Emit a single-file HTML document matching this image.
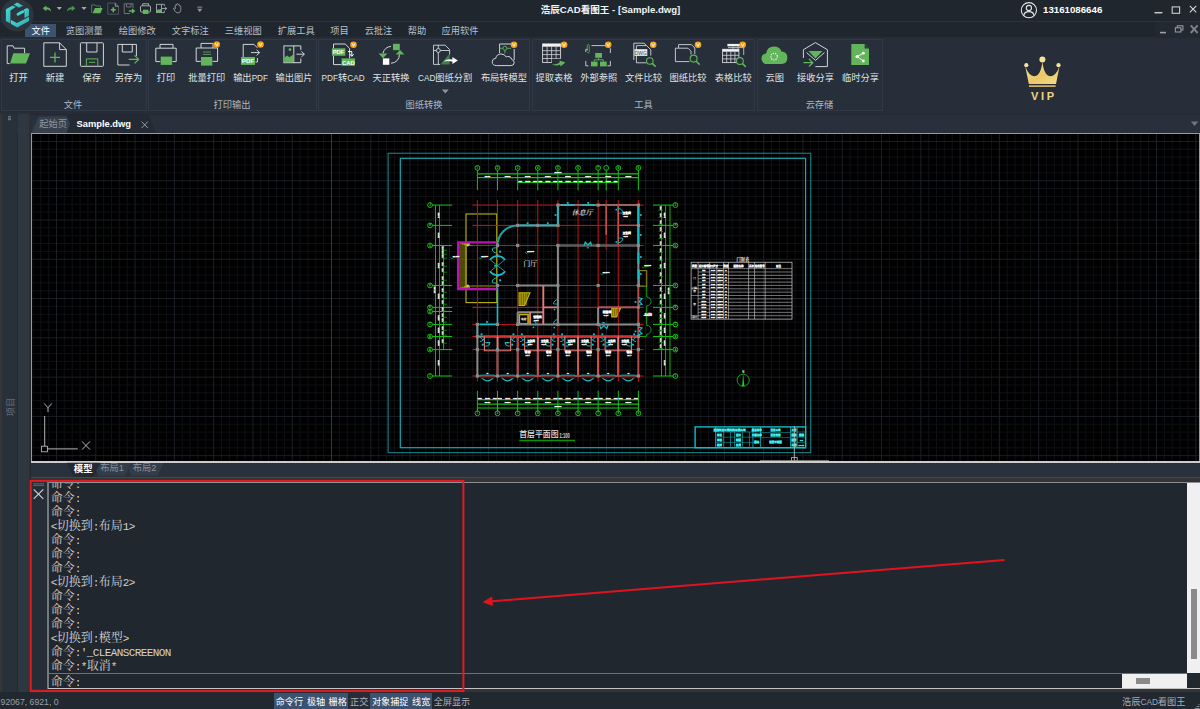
<!DOCTYPE html>
<html lang="zh-CN"><head><meta charset="utf-8"><title>浩辰CAD看图王 - [Sample.dwg]</title>
<style>
html,body{margin:0;padding:0;background:#222830;}
body{width:1200px;height:709px;overflow:hidden;position:relative;font-family:"Liberation Sans","Noto Sans CJK SC",sans-serif;}
#app{position:absolute;left:0;top:0;width:1200px;height:709px;overflow:hidden;background:#222830;}
.t{position:absolute;white-space:nowrap;line-height:1;z-index:2;}
.r{position:absolute;}
.la{font-size:0.89em;}
svg{position:absolute;left:0;top:0;overflow:visible;}
.cmd{position:absolute;left:51px;font-family:"Liberation Mono","Noto Serif CJK SC",serif;font-size:12px;color:#d4d4d4;white-space:nowrap;line-height:14px;height:14px;}
.cmd b{font-weight:normal;font-size:11px;letter-spacing:-0.6px;}
</style></head>
<body><div id="app">
<div class="r" style="left:0.00px;top:0.00px;width:1200.00px;height:21.00px;background:#20262e;"></div>
<div class="r" style="left:0.00px;top:21.00px;width:1200.00px;height:1.00px;background:#2b323c;"></div>
<div class="r" style="left:0.00px;top:22.00px;width:1200.00px;height:15.20px;background:#20262e;"></div>
<div class="r" style="left:0.00px;top:37.20px;width:1200.00px;height:76.80px;background:#262d38;"></div>
<div class="r" style="left:1.00px;top:39.30px;width:146.00px;height:72.20px;background:#272f3a;box-sizing:border-box;border:1px solid #303945;"></div>
<div class="r" style="left:148.30px;top:39.30px;width:168.40px;height:72.20px;background:#272f3a;box-sizing:border-box;border:1px solid #303945;"></div>
<div class="r" style="left:317.80px;top:39.30px;width:212.60px;height:72.20px;background:#272f3a;box-sizing:border-box;border:1px solid #303945;"></div>
<div class="r" style="left:532.30px;top:39.30px;width:222.90px;height:72.20px;background:#272f3a;box-sizing:border-box;border:1px solid #303945;"></div>
<div class="r" style="left:757.40px;top:39.30px;width:125.20px;height:72.20px;background:#272f3a;box-sizing:border-box;border:1px solid #303945;"></div>
<div class="r" style="left:883.00px;top:37.20px;width:317.00px;height:76.30px;background:#272e39;"></div>
<div class="r" style="left:0.00px;top:113.50px;width:1200.00px;height:1.00px;background:#222932;"></div>
<div class="r" style="left:0.00px;top:114.50px;width:1200.00px;height:19.00px;background:#27303b;"></div>
<div class="r" style="left:0.00px;top:114.00px;width:1.70px;height:578.00px;background:#363636;"></div>
<div class="r" style="left:1.70px;top:114.00px;width:15.80px;height:578.00px;background:#28303a;"></div>
<div class="r" style="left:17.50px;top:114.00px;width:8.50px;height:578.00px;background:#2e3843;"></div>
<div class="r" style="left:26.00px;top:114.00px;width:3.20px;height:578.00px;background:#32353a;"></div>
<div class="r" style="left:29.20px;top:114.00px;width:1.30px;height:578.00px;background:#28303a;"></div>
<div class="r" style="left:30.50px;top:133.00px;width:1169.50px;height:329.70px;background:#9a9a9a;"></div>
<div class="r" style="left:32.00px;top:134.00px;width:1167.00px;height:326.70px;background:#000;"></div>
<div class="r" style="left:30.50px;top:460.70px;width:1169.50px;height:2.00px;background:#cdcdcd;"></div>
<div class="r" style="left:30.50px;top:462.70px;width:1169.50px;height:14.80px;background:#29313c;"></div>
<div class="r" style="left:30.50px;top:477.30px;width:1169.50px;height:0.80px;background:#3a4b60;"></div>
<div class="r" style="left:30.50px;top:478.00px;width:1169.50px;height:4.00px;background:#323436;"></div>
<div class="r" style="left:47.00px;top:482.10px;width:1153.00px;height:1.00px;background:#8c9095;"></div>
<div class="r" style="left:30.50px;top:482.00px;width:16.50px;height:207.00px;background:#252d37;"></div>
<div class="r" style="left:47.00px;top:482.10px;width:1.80px;height:206.50px;background:#74797e;"></div>
<div class="r" style="left:48.80px;top:483.10px;width:1138.20px;height:205.20px;background:#21272f;"></div>
<div class="r" style="left:48.50px;top:673.00px;width:1138.50px;height:1.00px;background:#6e7278;"></div>
<div class="r" style="left:47.50px;top:688.20px;width:1152.50px;height:1.00px;background:#c4c4c4;"></div>
<div class="r" style="left:30.50px;top:689.20px;width:1169.50px;height:2.80px;background:#323436;"></div>
<div class="r" style="left:1187.00px;top:483.00px;width:13.00px;height:190.00px;background:#f0f0f0;"></div>
<div class="r" style="left:1191.40px;top:589.00px;width:6.00px;height:69.60px;background:#8a8a8a;"></div>
<div class="r" style="left:1122.20px;top:674.00px;width:64.80px;height:14.00px;background:#f0f0f0;"></div>
<div class="r" style="left:1136.30px;top:678.20px;width:13.70px;height:5.50px;background:#8a8a8a;"></div>
<div class="r" style="left:0.00px;top:692.00px;width:1200.00px;height:17.00px;background:#222830;"></div>
<div class="r" style="left:274.40px;top:693.40px;width:73.60px;height:15.60px;background:#3b5270;"></div>
<div class="r" style="left:369.60px;top:693.40px;width:62.00px;height:15.60px;background:#3b5270;"></div>
<div class="r" style="left:348.00px;top:693.40px;width:21.60px;height:15.60px;background:#262d37;"></div>
<div class="t" style="left:610.50px;top:10.30px;font-size:9.60px;color:#f2f4f6;font-weight:bold;transform:translate(-50%,-50%);">浩辰CAD看图王 - [Sample.dwg]</div>
<div class="t" style="left:1043.00px;top:10.20px;font-size:9.70px;color:#ffffff;font-weight:bold;transform:translate(0,-50%);">13161086646</div>
<div class="r" style="left:25.40px;top:24.00px;width:31.00px;height:13.00px;background:#3b5270;"></div>
<div class="t" style="left:40.80px;top:31.60px;font-size:9.25px;color:#ffffff;font-weight:normal;transform:translate(-50%,-50%);">文件</div>
<div class="t" style="left:84.30px;top:31.60px;font-size:9.25px;color:#b9c0c9;font-weight:normal;transform:translate(-50%,-50%);">览图测量</div>
<div class="t" style="left:137.30px;top:31.60px;font-size:9.25px;color:#b9c0c9;font-weight:normal;transform:translate(-50%,-50%);">绘图修改</div>
<div class="t" style="left:190.30px;top:31.60px;font-size:9.25px;color:#b9c0c9;font-weight:normal;transform:translate(-50%,-50%);">文字标注</div>
<div class="t" style="left:243.30px;top:31.60px;font-size:9.25px;color:#b9c0c9;font-weight:normal;transform:translate(-50%,-50%);">三维视图</div>
<div class="t" style="left:296.30px;top:31.60px;font-size:9.25px;color:#b9c0c9;font-weight:normal;transform:translate(-50%,-50%);">扩展工具</div>
<div class="t" style="left:339.50px;top:31.60px;font-size:9.25px;color:#b9c0c9;font-weight:normal;transform:translate(-50%,-50%);">项目</div>
<div class="t" style="left:378.50px;top:31.60px;font-size:9.25px;color:#b9c0c9;font-weight:normal;transform:translate(-50%,-50%);">云批注</div>
<div class="t" style="left:417.00px;top:31.60px;font-size:9.25px;color:#b9c0c9;font-weight:normal;transform:translate(-50%,-50%);">帮助</div>
<div class="t" style="left:460.00px;top:31.60px;font-size:9.25px;color:#b9c0c9;font-weight:normal;transform:translate(-50%,-50%);">应用软件</div>
<div class="t" style="left:18.40px;top:78.50px;font-size:9.25px;color:#dfe3e7;font-weight:normal;transform:translate(-50%,-50%);">打开</div>
<div class="t" style="left:55.00px;top:78.50px;font-size:9.25px;color:#dfe3e7;font-weight:normal;transform:translate(-50%,-50%);">新建</div>
<div class="t" style="left:91.80px;top:78.50px;font-size:9.25px;color:#dfe3e7;font-weight:normal;transform:translate(-50%,-50%);">保存</div>
<div class="t" style="left:128.50px;top:78.50px;font-size:9.25px;color:#dfe3e7;font-weight:normal;transform:translate(-50%,-50%);">另存为</div>
<div class="t" style="left:166.00px;top:78.50px;font-size:9.25px;color:#dfe3e7;font-weight:normal;transform:translate(-50%,-50%);">打印</div>
<div class="t" style="left:206.70px;top:78.50px;font-size:9.25px;color:#dfe3e7;font-weight:normal;transform:translate(-50%,-50%);">批量打印</div>
<div class="t" style="left:250.60px;top:78.50px;font-size:9.25px;color:#dfe3e7;font-weight:normal;transform:translate(-50%,-50%);">输出<span class="la">PDF</span></div>
<div class="t" style="left:294.00px;top:78.50px;font-size:9.25px;color:#dfe3e7;font-weight:normal;transform:translate(-50%,-50%);">输出图片</div>
<div class="t" style="left:343.10px;top:78.50px;font-size:9.25px;color:#dfe3e7;font-weight:normal;transform:translate(-50%,-50%);"><span class="la">PDF</span>转<span class="la">CAD</span></div>
<div class="t" style="left:391.10px;top:78.50px;font-size:9.25px;color:#dfe3e7;font-weight:normal;transform:translate(-50%,-50%);">天正转换</div>
<div class="t" style="left:445.20px;top:78.50px;font-size:9.25px;color:#dfe3e7;font-weight:normal;transform:translate(-50%,-50%);"><span class="la">CAD</span>图纸分割</div>
<div class="t" style="left:504.00px;top:78.50px;font-size:9.25px;color:#dfe3e7;font-weight:normal;transform:translate(-50%,-50%);">布局转模型</div>
<div class="t" style="left:554.10px;top:78.50px;font-size:9.25px;color:#dfe3e7;font-weight:normal;transform:translate(-50%,-50%);">提取表格</div>
<div class="t" style="left:598.70px;top:78.50px;font-size:9.25px;color:#dfe3e7;font-weight:normal;transform:translate(-50%,-50%);">外部参照</div>
<div class="t" style="left:643.50px;top:78.50px;font-size:9.25px;color:#dfe3e7;font-weight:normal;transform:translate(-50%,-50%);">文件比较</div>
<div class="t" style="left:688.10px;top:78.50px;font-size:9.25px;color:#dfe3e7;font-weight:normal;transform:translate(-50%,-50%);">图纸比较</div>
<div class="t" style="left:733.30px;top:78.50px;font-size:9.25px;color:#dfe3e7;font-weight:normal;transform:translate(-50%,-50%);">表格比较</div>
<div class="t" style="left:774.70px;top:78.50px;font-size:9.25px;color:#dfe3e7;font-weight:normal;transform:translate(-50%,-50%);">云图</div>
<div class="t" style="left:815.40px;top:78.50px;font-size:9.25px;color:#dfe3e7;font-weight:normal;transform:translate(-50%,-50%);">接收分享</div>
<div class="t" style="left:860.40px;top:78.50px;font-size:9.25px;color:#dfe3e7;font-weight:normal;transform:translate(-50%,-50%);">临时分享</div>
<div class="t" style="left:73.00px;top:106.00px;font-size:9.25px;color:#b0b8c2;font-weight:normal;transform:translate(-50%,-50%);">文件</div>
<div class="t" style="left:232.00px;top:106.00px;font-size:9.25px;color:#b0b8c2;font-weight:normal;transform:translate(-50%,-50%);">打印输出</div>
<div class="t" style="left:424.00px;top:106.00px;font-size:9.25px;color:#b0b8c2;font-weight:normal;transform:translate(-50%,-50%);">图纸转换</div>
<div class="t" style="left:643.40px;top:106.00px;font-size:9.25px;color:#b0b8c2;font-weight:normal;transform:translate(-50%,-50%);">工具</div>
<div class="t" style="left:819.50px;top:106.00px;font-size:9.25px;color:#b0b8c2;font-weight:normal;transform:translate(-50%,-50%);">云存储</div>
<div class="t" style="left:1044.00px;top:96.00px;font-size:11.00px;color:#f0d484;font-weight:bold;transform:translate(-50%,-50%);letter-spacing:2.7px;">VIP</div>
<div class="t" style="left:53.20px;top:125.30px;font-size:9.25px;color:#8d96a1;font-weight:normal;transform:translate(-50%,-50%);">起始页</div>
<div class="t" style="left:76.50px;top:125.20px;font-size:9.35px;color:#ffffff;font-weight:bold;transform:translate(0,-50%);">Sample.dwg</div>
<div class="t" style="left:83.20px;top:469.00px;font-size:9.40px;color:#ffffff;font-weight:bold;transform:translate(-50%,-50%);">模型</div>
<div class="t" style="left:112.20px;top:469.00px;font-size:9.25px;color:#8a929c;font-weight:normal;transform:translate(-50%,-50%);">布局1</div>
<div class="t" style="left:144.60px;top:469.00px;font-size:9.25px;color:#8a929c;font-weight:normal;transform:translate(-50%,-50%);">布局2</div>
<div class="t" style="left:11.6px;top:407.4px;font-size:9.25px;color:#626d79;transform:translate(-50%,-50%) rotate(-90deg);">项目</div>
<div class="t" style="left:0.60px;top:702.00px;font-size:8.70px;color:#98a0aa;font-weight:normal;transform:translate(0,-50%);">92067, 6921, 0</div>
<div class="t" style="left:289.40px;top:702.60px;font-size:9.10px;color:#ffffff;font-weight:normal;transform:translate(-50%,-50%);">命令行</div>
<div class="t" style="left:316.00px;top:702.60px;font-size:9.10px;color:#ffffff;font-weight:normal;transform:translate(-50%,-50%);">极轴</div>
<div class="t" style="left:337.70px;top:702.60px;font-size:9.10px;color:#ffffff;font-weight:normal;transform:translate(-50%,-50%);">栅格</div>
<div class="t" style="left:359.20px;top:702.60px;font-size:9.10px;color:#aab2bc;font-weight:normal;transform:translate(-50%,-50%);">正交</div>
<div class="t" style="left:390.20px;top:702.60px;font-size:9.10px;color:#ffffff;font-weight:normal;transform:translate(-50%,-50%);">对象捕捉</div>
<div class="t" style="left:421.20px;top:702.60px;font-size:9.10px;color:#ffffff;font-weight:normal;transform:translate(-50%,-50%);">线宽</div>
<div class="t" style="left:452.00px;top:702.60px;font-size:9.10px;color:#aab2bc;font-weight:normal;transform:translate(-50%,-50%);">全屏显示</div>
<div class="t" style="left:1153.80px;top:702.80px;font-size:9.25px;color:#a4acb6;font-weight:normal;transform:translate(-50%,-50%);">浩辰<span class="la">CAD</span>看图王</div>
<div style="position:absolute;left:48.5px;top:483px;width:1138px;height:205px;overflow:hidden;z-index:2;">
<div class="cmd" style="left:2.3px;top:-5px;">命令<b>:</b></div>
<div class="cmd" style="left:2.3px;top:9px;">命令<b>:</b></div>
<div class="cmd" style="left:2.3px;top:23px;">命令<b>:</b></div>
<div class="cmd" style="left:2.3px;top:37px;"><b>&lt;</b>切换到<b>:</b>布局<b>1&gt;</b></div>
<div class="cmd" style="left:2.3px;top:51px;">命令<b>:</b></div>
<div class="cmd" style="left:2.3px;top:65px;">命令<b>:</b></div>
<div class="cmd" style="left:2.3px;top:79px;">命令<b>:</b></div>
<div class="cmd" style="left:2.3px;top:93px;"><b>&lt;</b>切换到<b>:</b>布局<b>2&gt;</b></div>
<div class="cmd" style="left:2.3px;top:107px;">命令<b>:</b></div>
<div class="cmd" style="left:2.3px;top:121px;">命令<b>:</b></div>
<div class="cmd" style="left:2.3px;top:135px;">命令<b>:</b></div>
<div class="cmd" style="left:2.3px;top:149px;"><b>&lt;</b>切换到<b>:</b>模型<b>&gt;</b></div>
<div class="cmd" style="left:2.3px;top:163px;">命令<b>:'_CLEANSCREENON</b></div>
<div class="cmd" style="left:2.3px;top:177px;">命令<b>:*</b>取消<b>*</b></div>
<div class="cmd" style="left:2.3px;top:193px;">命令<b>:</b></div>
</div>
<svg width="1200" height="135" viewBox="0 0 1200 135" style="z-index:1">
<defs><linearGradient id="lg" x1="0" y1="0" x2="1" y2="1"><stop offset="0" stop-color="#49e0e0"/><stop offset="1" stop-color="#2aa3a8"/></linearGradient><linearGradient id="gold" x1="0" y1="0" x2="1" y2="1"><stop offset="0" stop-color="#f7e7a6"/><stop offset="0.55" stop-color="#ecc865"/><stop offset="1" stop-color="#f5dc8e"/></linearGradient></defs>
<circle cx="17.2" cy="15.2" r="16.4" fill="#2f353d"/>
<g fill="url(#lg)"><polygon points="13.8,4.6 17.2,2.6 23.1,5.7 18.9,7.7"/><polygon points="5.9,9.3 12.7,5.4 15.8,7.1 10.4,10.4 10.4,23.4 5.9,20.9"/><polygon points="11,20 16.9,23.1 29,16.9 29,20.9 17.2,27.6 11,24"/><polygon points="23.7,9.6 27.1,7.9 29,9.3 29,16.1 24.5,18 24.5,11.3"/></g><line x1="18" y1="14.3" x2="23" y2="11.6" stroke="#3fd2d3" stroke-width="2.8" stroke-linecap="round"/>
<path d="M42.7 8.3 L46.3 5.4 L46.3 7.2 C49.5 7.2 51 9.2 51.2 11.8 C50 10.2 48.6 9.6 46.3 9.6 L46.3 11.2 Z" fill="#62b55a"/>
<path d="M75.4 8.3 L71.8 5.4 L71.8 7.2 C68.6 7.2 67.1 9.2 66.9 11.8 C68.1 10.2 69.5 9.6 71.8 9.6 L71.8 11.2 Z" fill="#4c9147"/>
<polygon points="56.6,7 61.9,7 59.25,10.1" fill="#a4a8ad"/><polygon points="81.4,7 86.6,7 84,10.1" fill="#a4a8ad"/>
<path d="M91.6 13 V4.9 H95 L96 6 H100.4 V8" fill="none" stroke="#6a6f76" stroke-width="0.9"/>
<polygon points="92.6,13.3 94.9,8 102.6,8 100.5,13.3" fill="#62b55a"/>
<path d="M107.8 3 H115.3 L118.5 6.2 V14.2 H107.8 Z" fill="none" stroke="#555a61" stroke-width="0.9"/><path d="M115.3 3 V6.2 H118.5" fill="none" stroke="#a9adb2" stroke-width="0.9"/>
<path d="M110.8 9.75 H115.8 M113.3 7.2 V12.3" stroke="#62b55a" stroke-width="1.6"/>
<path d="M133 8 V3.8 H124.2 V13.5 H130" fill="none" stroke="#767b82" stroke-width="0.9"/><path d="M126.5 3.8 V7 H131 V3.8" fill="none" stroke="#767b82" stroke-width="0.9"/>
<path d="M128.8 11 H134 M132 9 L134.3 11 L132 13" fill="none" stroke="#62b55a" stroke-width="1.3"/>
<rect x="140.5" y="5.8" width="10" height="6.2" rx="1" fill="none" stroke="#b4b8bd" stroke-width="0.9"/><path d="M142.6 5.8 V3.8 H148.6 V5.8" fill="none" stroke="#b4b8bd" stroke-width="0.9"/>
<rect x="142.9" y="9.7" width="5.5" height="4.3" fill="#62b55a"/>
<rect x="156.6" y="4.3" width="4.8" height="8.3" fill="none" stroke="#b4b8bd" stroke-width="0.8"/><polygon points="157,12.4 157,10.2 158.6,9 159.6,9.8 161,8.8 161,12.4" fill="#62b55a"/>
<path d="M161.4 4.3 H164.3 V6.2 M164.3 10.6 V12.6 H161.4 M162 8.5 H166.6 M165 7 L166.8 8.5 L165 10" fill="none" stroke="#b4b8bd" stroke-width="0.8"/>
<path d="M175.3 8.8 V5.2 Q175.9 4.2 176.6 5.2 V4.2 Q177.3 3.2 178 4.2 V4.8 Q178.7 3.9 179.4 4.9 V6 Q180.2 5.4 180.8 6.4 V9.8 Q180.8 12.9 178 12.9 Q175.8 12.9 174.8 11 L173.5 8.4 Q174.3 7.4 175.3 8.8" fill="none" stroke="#9ea3a9" stroke-width="0.8"/>
<path d="M197.3 7.1 H202.2" stroke="#8f949a" stroke-width="1"/><polygon points="197.3,8.8 202.2,8.8 199.75,12.3" fill="#8f949a"/>
<circle cx="1028.9" cy="10.2" r="7.6" fill="none" stroke="#e4e4e4" stroke-width="1.1"/><circle cx="1028.9" cy="8" r="2.6" fill="none" stroke="#e4e4e4" stroke-width="1.1"/><path d="M1023.8 15.6 Q1024.2 11.6 1028.9 11.6 Q1033.6 11.6 1034 15.6" fill="none" stroke="#e4e4e4" stroke-width="1.1"/>
<path d="M1154.5 12.7 H1162.4" stroke="#c6c6c6" stroke-width="1.5"/><rect x="1172.2" y="6.9" width="7.4" height="6.4" fill="none" stroke="#cccccc" stroke-width="1.1"/><path d="M1189.8 5.8 L1196.3 12.3 M1196.3 5.8 L1189.8 12.3" stroke="#d8d8d8" stroke-width="1.1"/>
<rect x="1155" y="22" width="45" height="16" fill="#232932"/>
<path d="M1160 32.6 H1166" stroke="#9ea2a7" stroke-width="1.6"/><rect x="1177.3" y="25.8" width="5.6" height="4.2" fill="none" stroke="#9ea2a7" stroke-width="1"/><rect x="1175.3" y="27.8" width="5.6" height="4.2" fill="#232932" stroke="#9ea2a7" stroke-width="1"/><path d="M1190.8 25.4 L1197.6 33 M1197.6 25.4 L1190.8 33" stroke="#7e8287" stroke-width="1.9"/>
<path d="M1028.8 83.9 L1025.3 66.6 Q1030.4 79.6 1037.6 75 Q1041.4 71.6 1042.4 61.8 Q1043.4 71.6 1047.2 75 Q1054.4 79.6 1059.5 66.6 L1056 83.9 Z" fill="url(#gold)"/><circle cx="1042.4" cy="59.6" r="3" fill="#f6e29b"/><circle cx="1026.3" cy="65.2" r="2.1" fill="#f6e29b"/><circle cx="1058.5" cy="65.2" r="2.1" fill="#f6e29b"/><path d="M1029 86.1 H1055.6" stroke="#ecc968" stroke-width="1.5"/>
<path d="M9.6 63.6 H7.2 V45.8 H13 L14.2 48.2 H24.6 V53" fill="none" stroke="#d2d6da" stroke-width="1"/>
<polygon points="10,63.6 13.3,53.2 30,53.2 26,63.6" fill="#62b55a"/>
<path d="M43.8 42.8 H59.6 L66.3 49.6 V66.3 H43.8 Z" fill="none" stroke="#d2d6da" stroke-width="1"/><path d="M59.6 42.8 V49.6 H66.3" fill="none" stroke="#d2d6da" stroke-width="1"/>
<path d="M50 57.4 H60 M55 52.4 V62.4" stroke="#62b55a" stroke-width="1.3"/>
<rect x="80.4" y="42.8" width="23" height="23.5" rx="0.8" fill="none" stroke="#d2d6da" stroke-width="1"/><path d="M86.7 42.8 V52 H97 V42.8" fill="none" stroke="#d2d6da" stroke-width="1"/>
<path d="M86.4 66.3 V58.9 H97.8 V66.3 M89 62.3 H95.2" fill="none" stroke="#62b55a" stroke-width="1"/>
<path d="M136.4 56 V44.4 H117.8 V65 H129.6" fill="none" stroke="#d2d6da" stroke-width="1"/><path d="M122.3 44.4 V52 H132.3 V44.4" fill="none" stroke="#d2d6da" stroke-width="1"/>
<path d="M128.6 59.4 H138.2 M134.6 55.4 L138.6 59.4 L134.6 63.4" fill="none" stroke="#62b55a" stroke-width="1.3"/>
<path d="M160.4 61.6 H155.8 V48.2 H176.2 V61.6 H172.4 M160 48.2 V44.4 H173 V48.2" fill="none" stroke="#d2d6da" stroke-width="1"/>
<rect x="160.7" y="56.6" width="11.4" height="8.3" fill="#62b55a"/>
<path d="M200.8 61.4 H196.2 V48 H217.6 V61.4 H212.6 M201 48 V43.4 H213 V48" fill="none" stroke="#d2d6da" stroke-width="1"/>
<path d="M203 52 H211 M203 54.4 H211" stroke="#62b55a" stroke-width="0.8"/><rect x="201" y="57" width="11.3" height="8.6" fill="#62b55a"/>
<circle cx="216.7" cy="44.5" r="3.3" fill="#f2a21e"/><path d="M215.20 43.10 l1.5 3 l1.5 -3" fill="none" stroke="#fff" stroke-width="0.9"/>
<path d="M243.2 57 V44.4 H254 L257.4 47.8 M257.4 58 V62 H255.4" fill="none" stroke="#d2d6da" stroke-width="1"/>
<path d="M251 52.6 H259.4 M256.6 49.8 L259.6 52.6 L256.6 55.4" fill="none" stroke="#d2d6da" stroke-width="1"/>
<rect x="241" y="57" width="14" height="7.9" fill="#62b55a"/><text x="248" y="63.4" font-size="6.2" font-weight="bold" fill="#fff" text-anchor="middle" font-family="Liberation Sans,sans-serif">PDF</text>
<circle cx="260.5" cy="44.5" r="3.3" fill="#f2a21e"/><path d="M259.00 43.10 l1.5 3 l1.5 -3" fill="none" stroke="#fff" stroke-width="0.9"/>
<rect x="283.9" y="45.9" width="9.9" height="16.8" fill="none" stroke="#d2d6da" stroke-width="1"/><path d="M293.8 45.9 H300.8 V50 M300.8 58.6 V62.7 H293.8" fill="none" stroke="#d2d6da" stroke-width="1"/>
<polygon points="284.4,62.2 284.4,57.6 287.2,55.6 289.4,57.2 293.3,54.4 293.3,62.2" fill="#62b55a"/><circle cx="290" cy="49.6" r="1.4" fill="#62b55a"/>
<path d="M296.4 54.2 H304.2 M301.4 51.4 L304.4 54.2 L301.4 57" fill="none" stroke="#d2d6da" stroke-width="1"/>
<path d="M333.5 48.3 V44 H345.2 L349.6 48.4 V58.4 M341.6 64.6 H333.5 V55.7" fill="none" stroke="#d2d6da" stroke-width="1"/>
<rect x="331.9" y="48.3" width="13.4" height="7.4" fill="#62b55a"/><text x="338.6" y="54.4" font-size="5.9" font-weight="bold" fill="#fff" text-anchor="middle" font-family="Liberation Sans,sans-serif">PDF</text>
<rect x="341.6" y="58.4" width="13.4" height="7.4" fill="#62b55a"/><text x="348.3" y="64.5" font-size="5.9" font-weight="bold" fill="#fff" text-anchor="middle" font-family="Liberation Sans,sans-serif">CAD</text>
<path d="M348 51.6 H351.8 V55.8 M350 54.2 L351.8 56.4 L353.6 54.2" fill="none" stroke="#fff" stroke-width="1"/>
<circle cx="353.5" cy="44.7" r="3.3" fill="#f2a21e"/><path d="M352.00 43.30 l1.5 3 l1.5 -3" fill="none" stroke="#fff" stroke-width="0.9"/>
<path d="M383 53.4 A8.4 8.4 0 0 1 391 46.4" fill="none" stroke="#d2d6da" stroke-width="1"/><path d="M399.4 54.4 A8.4 8.4 0 0 1 391 63.2" fill="none" stroke="#d2d6da" stroke-width="1"/>
<polygon points="378.6,53.6 387.4,53.6 383,58.2" fill="#62b55a"/><polygon points="395.6,54.6 404.4,54.6 400,50" fill="#62b55a"/>
<rect x="393" y="43.8" width="6.8" height="6.4" fill="#62b55a"/><rect x="382.9" y="58.4" width="6.4" height="6.4" fill="#fff"/>
<path d="M433.5 64.4 V45.2 H445.2 L449.6 49.6 V55 M433.5 64.4 H440 M438.3 45.2 V48.5 M438.3 52.5 V64.4 M433.5 50.5 H436.3 M440.3 50.5 H449.6" fill="none" stroke="#d2d6da" stroke-width="0.9"/><circle cx="438.3" cy="50.5" r="2" fill="none" stroke="#d2d6da" stroke-width="0.9"/>
<polygon points="440.4,64.4 449.6,53.6 449.6,64.4" fill="#3f7f45"/>
<path d="M443.4 61.6 Q447.4 58.4 452.4 59.4 V57 L457.8 60.4 L452.4 64 V61.6 Q447.4 60.6 443.4 61.6 Z" fill="#fff"/>
<path d="M499.6 53 V44 H511 M514.2 49 V60" fill="none" stroke="#d2d6da" stroke-width="1"/>
<path d="M496.6 65.6 Q492.2 65.6 492.2 61.8 Q492.2 58.6 495.8 58.2 Q496.6 54 501.2 54 Q504.8 54 506.2 57 Q507.4 56.2 509 56.6 Q511.4 57.2 511.6 59.4 Q514.2 60 514.2 62.6 Q514.2 65.6 510.8 65.6 Z" fill="#272f3a" stroke="#d2d6da" stroke-width="1"/>
<path d="M499.6 48.3 H502.9 M506.9 48.3 H511 M504.9 50.3 V53.6" stroke="#62b55a" stroke-width="0.9"/><circle cx="504.9" cy="48.3" r="2" fill="none" stroke="#62b55a" stroke-width="0.9"/>
<circle cx="514.0" cy="44.7" r="3.3" fill="#f2a21e"/><path d="M512.50 43.30 l1.5 3 l1.5 -3" fill="none" stroke="#fff" stroke-width="0.9"/>
<rect x="542.6" y="43.9" width="18" height="18.6" fill="none" stroke="#d2d6da" stroke-width="0.9"/><rect x="542.6" y="43.9" width="18" height="2.8" fill="#f2f2f2"/>
<path d="M547.1 46.7 V62.5 M551.6 46.7 V62.5 M556.1 46.7 V62.5 M542.6 50.7 H560.6 M542.6 54.6 H560.6 M542.6 58.5 H560.6" stroke="#d2d6da" stroke-width="0.8"/>
<rect x="551.8" y="58.8" width="13.4" height="7.6" fill="#272f3a"/><path d="M551.6 64.4 Q556.4 65 559.6 62.6 L559.6 60.4 L565.4 62.4 L560.4 66.4 L560.2 64.6 Q556.4 66.4 551.6 64.4 Z" fill="#62b55a"/>
<circle cx="564.1" cy="44.8" r="3.3" fill="#f2a21e"/><path d="M562.60 43.40 l1.5 3 l1.5 -3" fill="none" stroke="#fff" stroke-width="0.9"/>
<path d="M587.6 49.4 H585.8 V52 M585.8 61 V65.8 H588.4 M607.4 65.8 H610.4 V61 M610.4 53 V48.6 L607.2 45.6 H591.4" fill="none" stroke="#d2d6da" stroke-width="0.9"/>
<path d="M587.2 50.8 V45.2 Q588.2 43.4 589.2 45.2 V52.4 Q588.2 53.8 587.2 52.4" fill="none" stroke="#62b55a" stroke-width="0.8"/>
<rect x="595.2" y="53" width="6.8" height="4.8" fill="#62b55a"/><rect x="591" y="61.6" width="6.6" height="4.8" fill="#62b55a"/><rect x="600" y="61.6" width="6.7" height="4.8" fill="#62b55a"/>
<path d="M598.6 57.8 V59.8 M594.3 61.6 V59.8 H603.3 V61.6" fill="none" stroke="#62b55a" stroke-width="0.9"/>
<circle cx="608.2" cy="44.8" r="3.3" fill="#f2a21e"/><path d="M606.70 43.40 l1.5 3 l1.5 -3" fill="none" stroke="#fff" stroke-width="0.9"/>
<path d="M646 62.8 H636.4 V45.6 H646.6 L650.8 49.8 V55.6" fill="none" stroke="#d2d6da" stroke-width="0.9"/><path d="M633.8 60 V43.2 H644 L646.4 45.4" fill="none" stroke="#d2d6da" stroke-width="0.9"/>
<rect x="634.4" y="49.2" width="12.9" height="6.7" fill="#ececec"/><text x="640.8" y="54.6" font-size="5" fill="#444" text-anchor="middle" font-family="Liberation Sans,sans-serif">DWG</text>
<circle cx="649.8" cy="61" r="3.3" fill="#272f3a" stroke="#62b55a" stroke-width="1.1"/><path d="M652.2 63.4 L655.6 66.6" stroke="#62b55a" stroke-width="1.5"/>
<circle cx="653.2" cy="44.8" r="3.3" fill="#f2a21e"/><path d="M651.70 43.40 l1.5 3 l1.5 -3" fill="none" stroke="#fff" stroke-width="0.9"/>
<path d="M678.6 48 V44.6 H691.4 L694.8 48 V54" fill="none" stroke="#d2d6da" stroke-width="0.9"/><path d="M689.4 61.6 H675.4 V48.2 H688 L691 51.2 V54.4" fill="none" stroke="#d2d6da" stroke-width="0.9"/>
<circle cx="693.6" cy="58.6" r="3.5" fill="none" stroke="#62b55a" stroke-width="1.1"/><path d="M696.2 61.2 L699.6 64.6" stroke="#62b55a" stroke-width="1.5"/>
<circle cx="698.0" cy="44.8" r="3.3" fill="#f2a21e"/><path d="M696.50 43.40 l1.5 3 l1.5 -3" fill="none" stroke="#fff" stroke-width="0.9"/>
<rect x="727.4" y="43.9" width="16.3" height="2.4" fill="#f2f2f2"/><path d="M743.7 46 V55 M728 47.6 H743.7 M733 46.3 V49 M738 46.3 V49" fill="none" stroke="#d2d6da" stroke-width="0.8"/>
<rect x="722.6" y="49.3" width="16.3" height="13.3" fill="#272f3a" stroke="#d2d6da" stroke-width="0.9"/><rect x="722.6" y="49.3" width="16.3" height="2.4" fill="#f2f2f2"/>
<path d="M726.7 51.7 V62.6 M730.8 51.7 V62.6 M734.9 51.7 V62.6 M722.6 55.3 H738.9 M722.6 58.9 H738.9" stroke="#d2d6da" stroke-width="0.8"/>
<circle cx="739.9" cy="61" r="3.4" fill="#272f3a" stroke="#62b55a" stroke-width="1.1"/><path d="M742.4 63.5 L745.8 66.9" stroke="#62b55a" stroke-width="1.5"/>
<circle cx="742.7" cy="44.8" r="3.3" fill="#f2a21e"/><path d="M741.20 43.40 l1.5 3 l1.5 -3" fill="none" stroke="#fff" stroke-width="0.9"/>
<path d="M767.6 64 Q761.4 64 761.4 58.6 Q761.4 54 766 53.4 Q767 46.4 774.2 46.4 Q779.6 46.4 781.6 51.4 Q787.4 51.6 787.4 57.8 Q787.4 64 781.4 64 Z" fill="#62b55a"/>
<circle cx="774.1" cy="56.6" r="3.3" fill="none" stroke="#e8f4e6" stroke-width="1.2" stroke-dasharray="1.3 1"/>
<path d="M803.4 58 V49.7 L815.4 42.6 L827.4 49.7 V66.6 H815.4" fill="none" stroke="#d2d6da" stroke-width="1"/>
<polygon points="808.4,51 822.6,51 815.5,58.4" fill="#62b55a"/><path d="M806.6 52.6 L815.5 60.4 L824.4 52.6" fill="none" stroke="#d2d6da" stroke-width="1"/>
<path d="M803.4 62.7 H812.6 M809 58.9 L812.8 62.7 L809 66.5" fill="none" stroke="#62b55a" stroke-width="1.3"/>
<path d="M851.3 44 H864.6 L869 48.4 V64.9 H851.3 Z" fill="#62b55a"/><polygon points="864.6,44 869,48.4 864.6,48.4" fill="#2c3a34"/>
<path d="M863.3 53.2 L857.2 56.6 L863.3 61" fill="none" stroke="#fff" stroke-width="0.9"/><circle cx="857.2" cy="56.6" r="1.7" fill="#fff"/><circle cx="863.3" cy="53.2" r="1.4" fill="#fff"/><circle cx="863.3" cy="61" r="1.4" fill="#fff"/>
<polygon points="441.8,89.6 448.8,89.6 445.3,93.6" fill="#8e9399"/>
<path d="M31.3 133 L38.2 117.6 Q38.8 116.4 40.2 116.4 H65.6 Q66.8 116.4 67.3 117.4 L69.9 124.4 L66.4 133 Z" fill="#36414d"/>
<path d="M66.4 133 L70.4 123.8 L67 114.6 H148.6 L156.4 133 Z" fill="#232a33"/>
<path d="M141.6 121.6 L147.8 128 M147.8 121.6 L141.6 128" stroke="#9aa0a7" stroke-width="1"/>
<path d="M8 116.7 H11 M8 118.2 H11 M8 119.7 H11" stroke="#8a919a" stroke-width="0.8"/>
<polygon points="1190.8,121.5 1198.3,121.5 1194.55,125.9" fill="#70757b"/>
</svg>
<svg width="1200" height="709" viewBox="0 0 1200 709" style="z-index:1"><defs><clipPath id="cv"><rect x="32" y="134" width="1167" height="326.7"/></clipPath></defs><g clip-path="url(#cv)"><path d="M32.93 134V461.5M40.78 134V461.5M48.64 134V461.5M64.36 134V461.5M72.21 134V461.5M80.07 134V461.5M87.93 134V461.5M103.64 134V461.5M111.50 134V461.5M119.36 134V461.5M127.21 134V461.5M142.93 134V461.5M150.78 134V461.5M158.64 134V461.5M166.50 134V461.5M182.21 134V461.5M190.07 134V461.5M197.93 134V461.5M205.78 134V461.5M221.50 134V461.5M229.36 134V461.5M237.21 134V461.5M245.07 134V461.5M260.79 134V461.5M268.64 134V461.5M276.50 134V461.5M284.36 134V461.5M300.07 134V461.5M307.93 134V461.5M315.79 134V461.5M323.64 134V461.5M339.36 134V461.5M347.21 134V461.5M355.07 134V461.5M362.93 134V461.5M378.64 134V461.5M386.50 134V461.5M394.36 134V461.5M402.21 134V461.5M417.93 134V461.5M425.79 134V461.5M433.64 134V461.5M441.50 134V461.5M457.22 134V461.5M465.07 134V461.5M472.93 134V461.5M480.79 134V461.5M496.50 134V461.5M504.36 134V461.5M512.22 134V461.5M520.07 134V461.5M535.79 134V461.5M543.64 134V461.5M551.50 134V461.5M559.36 134V461.5M575.07 134V461.5M582.93 134V461.5M590.79 134V461.5M598.64 134V461.5M614.36 134V461.5M622.22 134V461.5M630.07 134V461.5M637.93 134V461.5M653.65 134V461.5M661.50 134V461.5M669.36 134V461.5M677.22 134V461.5M692.93 134V461.5M700.79 134V461.5M708.65 134V461.5M716.50 134V461.5M732.22 134V461.5M740.07 134V461.5M747.93 134V461.5M755.79 134V461.5M771.50 134V461.5M779.36 134V461.5M787.22 134V461.5M795.07 134V461.5M810.79 134V461.5M818.65 134V461.5M826.50 134V461.5M834.36 134V461.5M850.08 134V461.5M857.93 134V461.5M865.79 134V461.5M873.65 134V461.5M889.36 134V461.5M897.22 134V461.5M905.08 134V461.5M912.93 134V461.5M928.65 134V461.5M936.50 134V461.5M944.36 134V461.5M952.22 134V461.5M967.93 134V461.5M975.79 134V461.5M983.65 134V461.5M991.50 134V461.5M1007.22 134V461.5M1015.08 134V461.5M1022.93 134V461.5M1030.79 134V461.5M1046.51 134V461.5M1054.36 134V461.5M1062.22 134V461.5M1070.08 134V461.5M1085.79 134V461.5M1093.65 134V461.5M1101.51 134V461.5M1109.36 134V461.5M1125.08 134V461.5M1132.93 134V461.5M1140.79 134V461.5M1148.65 134V461.5M1164.36 134V461.5M1172.22 134V461.5M1180.08 134V461.5M1187.93 134V461.5M32 149.27H1199M32 157.13H1199M32 164.98H1199M32 172.84H1199M32 188.56H1199M32 196.41H1199M32 204.27H1199M32 212.13H1199M32 227.84H1199M32 235.70H1199M32 243.56H1199M32 251.41H1199M32 267.13H1199M32 274.98H1199M32 282.84H1199M32 290.70H1199M32 306.41H1199M32 314.27H1199M32 322.13H1199M32 329.98H1199M32 345.70H1199M32 353.56H1199M32 361.41H1199M32 369.27H1199M32 384.99H1199M32 392.84H1199M32 400.70H1199M32 408.56H1199M32 424.27H1199M32 432.13H1199M32 439.99H1199M32 447.84H1199" stroke="#111217" stroke-width="0.9" fill="none"/>
<path d="M56.50 134V461.5M95.78 134V461.5M135.07 134V461.5M174.36 134V461.5M213.64 134V461.5M252.93 134V461.5M292.21 134V461.5M331.50 134V461.5M370.79 134V461.5M410.07 134V461.5M449.36 134V461.5M488.64 134V461.5M527.93 134V461.5M567.22 134V461.5M606.50 134V461.5M645.79 134V461.5M685.07 134V461.5M724.36 134V461.5M763.65 134V461.5M802.93 134V461.5M842.22 134V461.5M881.50 134V461.5M920.79 134V461.5M960.08 134V461.5M999.36 134V461.5M1038.65 134V461.5M1077.93 134V461.5M1117.22 134V461.5M1156.51 134V461.5M1195.79 134V461.5M32 141.41H1199M32 180.70H1199M32 219.98H1199M32 259.27H1199M32 298.56H1199M32 337.84H1199M32 377.13H1199M32 416.41H1199M32 455.70H1199" stroke="#1f212b" stroke-width="0.9" fill="none"/>
<line x1="331.50" y1="134.00" x2="331.50" y2="461.50" stroke="#1b501b" stroke-width="0.90" /><rect x="388.1" y="153.2" width="422.7" height="299.5" fill="none" stroke="#169ca4" stroke-width="0.9"/>
<rect x="400.3" y="158.3" width="405.3" height="289.4" fill="none" stroke="#18a8b0" stroke-width="1.2"/>
<rect x="466" y="214" width="30.8" height="88.6" fill="none" stroke="#c2b40a" stroke-width="1.1"/>
<path d="M470 243.60 H460.00 V287.80 H470" fill="none" stroke="#c2b40a" stroke-width="0.8"/>
<path d="M470 244.20 H462.00 V287.20 H470" fill="none" stroke="#c2b40a" stroke-width="0.8"/>
<path d="M470 244.80 H464.00 V286.60 H470" fill="none" stroke="#c2b40a" stroke-width="0.8"/>
<path d="M496.8 245.40 H466.00 V286.00 H496.8" fill="none" stroke="#c2b40a" stroke-width="0.8"/>
<rect x="466.8" y="244.3" width="2" height="2" fill="#cfcfcf"/><rect x="466.8" y="284.7" width="2" height="2" fill="#cfcfcf"/>
<rect x="639.3" y="270.6" width="7.4" height="15.6" fill="none" stroke="#8e8406" stroke-width="1.1"/>
<polygon points="519,292.8 530,292.8 524.6,305.5 519,305.5" fill="#6a6000" stroke="#c2b40a" stroke-width="1.1"/>
<line x1="520.80" y1="292.80" x2="520.80" y2="305.50" stroke="#c2b40a" stroke-width="0.70" />
<line x1="522.60" y1="292.80" x2="522.60" y2="305.50" stroke="#c2b40a" stroke-width="0.70" />
<line x1="524.40" y1="292.80" x2="524.40" y2="305.50" stroke="#c2b40a" stroke-width="0.70" />
<line x1="526.20" y1="292.80" x2="526.20" y2="305.50" stroke="#c2b40a" stroke-width="0.70" />
<polygon points="611.7,308 620.7,308 616.4,316.9 611.7,316.9" fill="#7a6800" stroke="#c2b40a" stroke-width="1.1"/>
<line x1="613.50" y1="308.00" x2="613.50" y2="316.90" stroke="#c2b40a" stroke-width="0.70" />
<line x1="615.30" y1="308.00" x2="615.30" y2="316.90" stroke="#c2b40a" stroke-width="0.70" />
<line x1="617.10" y1="308.00" x2="617.10" y2="316.90" stroke="#c2b40a" stroke-width="0.70" />
<rect x="519.3" y="314.5" width="8.8" height="9.3" fill="none" stroke="#c2b40a" stroke-width="1.6"/>
<text x="523.70" y="320.40" font-size="2.80" fill="#fff" text-anchor="middle" font-weight="bold" font-family="Liberation Sans,Noto Sans CJK SC,sans-serif" >电梯</text>
<path d="M496.8 242.4 H458.1 V289 H496.8" fill="none" stroke="#b414b4" stroke-width="2.3"/>
<line x1="477.40" y1="200.00" x2="477.40" y2="381.50" stroke="#cc1414" stroke-width="1.00" />
<line x1="497.52" y1="200.00" x2="497.52" y2="381.50" stroke="#cc1414" stroke-width="1.00" />
<line x1="517.65" y1="200.00" x2="517.65" y2="381.50" stroke="#cc1414" stroke-width="1.00" />
<line x1="537.77" y1="200.00" x2="537.77" y2="381.50" stroke="#cc1414" stroke-width="1.00" />
<line x1="557.90" y1="200.00" x2="557.90" y2="381.50" stroke="#cc1414" stroke-width="1.00" />
<line x1="578.02" y1="200.00" x2="578.02" y2="381.50" stroke="#cc1414" stroke-width="1.00" />
<line x1="598.15" y1="200.00" x2="598.15" y2="381.50" stroke="#cc1414" stroke-width="1.00" />
<line x1="618.27" y1="200.00" x2="618.27" y2="381.50" stroke="#cc1414" stroke-width="1.00" />
<line x1="638.40" y1="200.00" x2="638.40" y2="381.50" stroke="#cc1414" stroke-width="1.00" />
<line x1="606.20" y1="200.00" x2="606.20" y2="250.00" stroke="#b01414" stroke-width="1.00" />
<line x1="472.40" y1="205.10" x2="643.60" y2="205.10" stroke="#cc1414" stroke-width="1.00" />
<line x1="472.40" y1="225.40" x2="643.60" y2="225.40" stroke="#cc1414" stroke-width="1.00" />
<line x1="472.40" y1="245.50" x2="643.60" y2="245.50" stroke="#cc1414" stroke-width="1.00" />
<line x1="472.40" y1="285.50" x2="643.60" y2="285.50" stroke="#cc1414" stroke-width="1.00" />
<line x1="472.40" y1="307.40" x2="643.60" y2="307.40" stroke="#cc1414" stroke-width="1.00" />
<line x1="472.40" y1="324.40" x2="643.60" y2="324.40" stroke="#cc1414" stroke-width="1.00" />
<line x1="472.40" y1="336.50" x2="643.60" y2="336.50" stroke="#cc1414" stroke-width="1.00" />
<line x1="472.40" y1="349.60" x2="643.60" y2="349.60" stroke="#cc1414" stroke-width="1.00" />
<line x1="472.40" y1="376.00" x2="643.60" y2="376.00" stroke="#cc1414" stroke-width="1.00" />
<line x1="557.90" y1="205.10" x2="638.40" y2="205.10" stroke="#8a8a8a" stroke-width="2.00" />
<line x1="557.90" y1="245.50" x2="638.40" y2="245.50" stroke="#8a8a8a" stroke-width="2.00" />
<line x1="638.40" y1="205.10" x2="638.40" y2="285.50" stroke="#8a8a8a" stroke-width="2.00" />
<line x1="638.40" y1="285.50" x2="638.40" y2="376.00" stroke="#8a8a8a" stroke-width="1.70" />
<line x1="517.65" y1="225.40" x2="557.90" y2="225.40" stroke="#8a8a8a" stroke-width="2.00" />
<line x1="557.90" y1="205.10" x2="557.90" y2="225.40" stroke="#8a8a8a" stroke-width="2.00" />
<line x1="517.65" y1="285.50" x2="557.90" y2="285.50" stroke="#8a8a8a" stroke-width="2.00" />
<line x1="557.90" y1="245.50" x2="557.90" y2="324.40" stroke="#8a8a8a" stroke-width="2.00" />
<line x1="517.65" y1="324.40" x2="638.40" y2="324.40" stroke="#8a8a8a" stroke-width="2.00" />
<line x1="517.65" y1="312.20" x2="543.30" y2="312.20" stroke="#8a8a8a" stroke-width="2.00" />
<line x1="517.65" y1="312.20" x2="517.65" y2="324.40" stroke="#8a8a8a" stroke-width="2.00" />
<line x1="598.15" y1="307.40" x2="598.15" y2="324.40" stroke="#8a8a8a" stroke-width="2.00" />
<line x1="477.40" y1="324.40" x2="477.40" y2="376.00" stroke="#8a8a8a" stroke-width="2.00" />
<line x1="477.40" y1="376.00" x2="638.40" y2="376.00" stroke="#8a8a8a" stroke-width="1.60" />
<line x1="477.40" y1="336.50" x2="483.40" y2="336.50" stroke="#8a8a8a" stroke-width="2.00" />
<line x1="606.20" y1="205.10" x2="606.20" y2="234.80" stroke="#e27a7a" stroke-width="1.40" />
<line x1="618.27" y1="205.10" x2="618.27" y2="245.50" stroke="#e27a7a" stroke-width="1.40" />
<line x1="618.27" y1="225.40" x2="638.40" y2="225.40" stroke="#e27a7a" stroke-width="1.40" />
<line x1="543.30" y1="285.50" x2="543.30" y2="324.40" stroke="#e27a7a" stroke-width="1.90" />
<line x1="543.30" y1="307.40" x2="557.90" y2="307.40" stroke="#e27a7a" stroke-width="1.90" />
<line x1="530.10" y1="312.20" x2="530.10" y2="324.40" stroke="#e27a7a" stroke-width="1.90" />
<line x1="598.15" y1="307.40" x2="638.40" y2="307.40" stroke="#e27a7a" stroke-width="1.90" />
<line x1="483.40" y1="336.50" x2="638.40" y2="336.50" stroke="#e27a7a" stroke-width="1.90" />
<line x1="497.52" y1="336.50" x2="497.52" y2="376.00" stroke="#e27a7a" stroke-width="1.90" />
<line x1="517.65" y1="336.50" x2="517.65" y2="376.00" stroke="#e27a7a" stroke-width="1.90" />
<line x1="537.77" y1="336.50" x2="537.77" y2="376.00" stroke="#e27a7a" stroke-width="1.90" />
<line x1="557.90" y1="336.50" x2="557.90" y2="376.00" stroke="#e27a7a" stroke-width="1.90" />
<line x1="578.02" y1="336.50" x2="578.02" y2="376.00" stroke="#e27a7a" stroke-width="1.90" />
<line x1="598.15" y1="336.50" x2="598.15" y2="376.00" stroke="#e27a7a" stroke-width="1.90" />
<line x1="618.27" y1="336.50" x2="618.27" y2="376.00" stroke="#e27a7a" stroke-width="1.90" />
<line x1="557.90" y1="205.10" x2="638.40" y2="205.10" stroke="#cc1414" stroke-width="0.70" />
<line x1="557.90" y1="245.50" x2="638.40" y2="245.50" stroke="#cc1414" stroke-width="0.70" />
<line x1="483.40" y1="336.50" x2="638.40" y2="336.50" stroke="#cc1414" stroke-width="0.70" />
<line x1="477.40" y1="376.00" x2="638.40" y2="376.00" stroke="#cc1414" stroke-width="0.70" />
<line x1="497.52" y1="336.50" x2="497.52" y2="376.00" stroke="#cc1414" stroke-width="0.70" />
<line x1="517.65" y1="336.50" x2="517.65" y2="376.00" stroke="#cc1414" stroke-width="0.70" />
<line x1="537.77" y1="336.50" x2="537.77" y2="376.00" stroke="#cc1414" stroke-width="0.70" />
<line x1="557.90" y1="336.50" x2="557.90" y2="376.00" stroke="#cc1414" stroke-width="0.70" />
<line x1="578.02" y1="336.50" x2="578.02" y2="376.00" stroke="#cc1414" stroke-width="0.70" />
<line x1="598.15" y1="336.50" x2="598.15" y2="376.00" stroke="#cc1414" stroke-width="0.70" />
<line x1="618.27" y1="336.50" x2="618.27" y2="376.00" stroke="#cc1414" stroke-width="0.70" />
<line x1="638.40" y1="285.50" x2="638.40" y2="376.00" stroke="#cc1414" stroke-width="0.60" />
<line x1="618.27" y1="205.10" x2="618.27" y2="245.50" stroke="#cc1414" stroke-width="0.60" />
<line x1="606.20" y1="205.10" x2="606.20" y2="234.80" stroke="#b01414" stroke-width="0.60" />
<line x1="598.15" y1="307.40" x2="638.40" y2="307.40" stroke="#cc1414" stroke-width="0.60" />
<line x1="618.27" y1="225.40" x2="638.40" y2="225.40" stroke="#cc1414" stroke-width="0.60" />
<path d="M484.40 336.50 V350.80 H497.52 V336.50" fill="none" stroke="#e27a7a" stroke-width="1.1"/>
<path d="M497.52 336.50 V350.80 H510.65 V336.50" fill="none" stroke="#e27a7a" stroke-width="1.1"/>
<path d="M524.65 336.50 V350.80 H537.77 V336.50" fill="none" stroke="#e27a7a" stroke-width="1.1"/>
<path d="M537.77 336.50 V350.80 H550.90 V336.50" fill="none" stroke="#e27a7a" stroke-width="1.1"/>
<path d="M564.90 336.50 V350.80 H578.02 V336.50" fill="none" stroke="#e27a7a" stroke-width="1.1"/>
<path d="M578.02 336.50 V350.80 H591.15 V336.50" fill="none" stroke="#e27a7a" stroke-width="1.1"/>
<path d="M605.15 336.50 V350.80 H618.27 V336.50" fill="none" stroke="#e27a7a" stroke-width="1.1"/>
<path d="M618.27 336.50 V350.80 H631.40 V336.50" fill="none" stroke="#e27a7a" stroke-width="1.1"/>
<path d="M497.52 245.50 A20.1 20.1 0 0 1 517.65 225.40" fill="none" stroke="#12aab2" stroke-width="1.9"/>
<line x1="519.65" y1="225.40" x2="535.77" y2="225.40" stroke="#14bcc4" stroke-width="1.90" />
<line x1="539.77" y1="225.40" x2="555.90" y2="225.40" stroke="#14bcc4" stroke-width="1.90" />
<line x1="557.90" y1="206.10" x2="557.90" y2="224.40" stroke="#14bcc4" stroke-width="1.90" />
<line x1="561.00" y1="205.10" x2="574.70" y2="205.10" stroke="#14bcc4" stroke-width="1.90" />
<line x1="581.50" y1="205.10" x2="595.00" y2="205.10" stroke="#14bcc4" stroke-width="1.90" />
<line x1="638.40" y1="207.10" x2="638.40" y2="223.40" stroke="#14bcc4" stroke-width="1.90" />
<line x1="638.40" y1="227.40" x2="638.40" y2="243.50" stroke="#14bcc4" stroke-width="1.90" />
<line x1="638.40" y1="252.50" x2="638.40" y2="264.00" stroke="#14bcc4" stroke-width="1.90" />
<line x1="638.40" y1="269.00" x2="638.40" y2="279.00" stroke="#14bcc4" stroke-width="1.90" />
<line x1="497.52" y1="287.50" x2="497.52" y2="323.40" stroke="#14bcc4" stroke-width="1.60" />
<line x1="479.40" y1="324.40" x2="497.52" y2="324.40" stroke="#14bcc4" stroke-width="1.90" />
<line x1="477.40" y1="326.40" x2="477.40" y2="334.50" stroke="#14bcc4" stroke-width="1.40" />
<rect x="566.90" y="202.00" width="1.8" height="1.8" fill="#14bcc4"/>
<rect x="587.30" y="202.00" width="1.8" height="1.8" fill="#14bcc4"/>
<rect x="526.70" y="222.30" width="1.8" height="1.8" fill="#14bcc4"/>
<rect x="546.90" y="222.30" width="1.8" height="1.8" fill="#14bcc4"/>
<rect x="486.10" y="321.10" width="1.8" height="1.8" fill="#14bcc4"/>
<rect x="554.60" y="214.10" width="1.8" height="1.8" fill="#14bcc4"/>
<rect x="639.90" y="214.10" width="1.8" height="1.8" fill="#14bcc4"/>
<rect x="639.90" y="234.10" width="1.8" height="1.8" fill="#14bcc4"/>
<rect x="639.90" y="256.10" width="1.8" height="1.8" fill="#14bcc4"/>
<rect x="639.90" y="273.10" width="1.8" height="1.8" fill="#14bcc4"/>
<path d="M489.92 260.00 A9.4 9.4 0 0 1 505.12 260.00" fill="none" stroke="#14bcc4" stroke-width="1.9"/>
<path d="M489.92 271.20 A9.4 9.4 0 0 0 505.12 271.20" fill="none" stroke="#14bcc4" stroke-width="1.9"/>
<line x1="490.92" y1="260.40" x2="504.12" y2="270.80" stroke="#14bcc4" stroke-width="0.80" />
<line x1="490.92" y1="270.80" x2="504.12" y2="260.40" stroke="#14bcc4" stroke-width="0.80" />
<polygon points="494.32,264.40 496.92,265.60 494.32,267.20" fill="#14bcc4"/>
<rect x="496.52" y="254.30" width="2" height="2" fill="#8e8e8e"/><rect x="496.52" y="275.00" width="2" height="2" fill="#8e8e8e"/>
<path d="M497.52 247.90 h-3.6 q-2.2 0.2 -1.6 2.2 q0.6 2 2.8 2.6 q1.6 0.6 2.4 1.4" fill="none" stroke="#14bcc4" stroke-width="1"/>
<path d="M497.52 283.10 h-3.6 q-2.2 -0.2 -1.6 -2.2 q0.6 -2 2.8 -2.6 q1.6 -0.6 2.4 -1.4" fill="none" stroke="#14bcc4" stroke-width="1"/>
<rect x="499.12" y="250.70" width="2" height="2" fill="#14bcc4"/><rect x="499.12" y="279.30" width="2" height="2" fill="#14bcc4"/>
<path d="M584 245.90 L585.2 242.10 L587.9 244.90 L590.6 242.10 L591.8 245.90" fill="none" stroke="#14bcc4" stroke-width="1.2"/>
<rect x="586.6" y="247.30" width="2.4" height="1" fill="#14bcc4"/>
<path d="M599.5 324.80 L600.8 328.60 L603.8 325.60 L606.8 328.60 L608.2 324.80" fill="none" stroke="#14bcc4" stroke-width="1.2"/>
<rect x="602.4" y="322.00" width="2.2" height="1.4" fill="#14bcc4"/>
<path d="M638.00 297.50 L642.00 298.70 L639.20 301.50 L642.00 304.30 L638.00 305.50" fill="none" stroke="#14bcc4" stroke-width="1.2"/>
<rect x="634.60" y="301.10" width="1.8" height="1.8" fill="#14bcc4"/>
<path d="M638.00 326.90 L642.00 328.10 L639.20 330.90 L642.00 333.70 L638.00 334.90" fill="none" stroke="#14bcc4" stroke-width="1.2"/>
<rect x="634.60" y="330.50" width="1.8" height="1.8" fill="#14bcc4"/>
<path d="M618.27 208.50 A4.60 4.60 0 0 1 622.88 213.10" fill="none" stroke="#14bcc4" stroke-width="1"/><line x1="618.27" y1="213.10" x2="622.88" y2="213.10" stroke="#14bcc4" stroke-width="0.80" />
<circle cx="616.27" cy="209.70" r="0.9" fill="#14bcc4"/>
<path d="M618.27 242.70 A4.60 4.60 0 0 0 622.88 238.10" fill="none" stroke="#14bcc4" stroke-width="1"/><line x1="618.27" y1="238.10" x2="622.88" y2="238.10" stroke="#14bcc4" stroke-width="0.80" />
<circle cx="616.27" cy="241.90" r="0.9" fill="#14bcc4"/>
<path d="M557.90 299.60 A4.40 4.40 0 0 0 553.50 304.00" fill="none" stroke="#14bcc4" stroke-width="1"/><line x1="557.90" y1="304.00" x2="553.50" y2="304.00" stroke="#14bcc4" stroke-width="0.80" />
<circle cx="554.50" cy="309.60" r="0.9" fill="#14bcc4"/>
<path d="M557.90 319.50 A4.40 4.40 0 0 0 553.50 323.90" fill="none" stroke="#14bcc4" stroke-width="1"/><line x1="557.90" y1="323.90" x2="553.50" y2="323.90" stroke="#14bcc4" stroke-width="0.80" />
<circle cx="554.30" cy="327.60" r="0.9" fill="#14bcc4"/>
<path d="M532.80 320.80 A3.60 3.60 0 0 1 536.40 324.40" fill="none" stroke="#14bcc4" stroke-width="1"/><line x1="532.80" y1="324.40" x2="536.40" y2="324.40" stroke="#14bcc4" stroke-width="0.80" />
<circle cx="533.40" cy="327.40" r="0.9" fill="#14bcc4"/>
<path d="M484.40 336.90 A4.60 4.60 0 0 1 479.80 341.50" fill="none" stroke="#14bcc4" stroke-width="1"/>
<line x1="479.80" y1="336.90" x2="483.10" y2="340.20" stroke="#14bcc4" stroke-width="0.90" />
<circle cx="481.60" cy="334.30" r="1.1" fill="#14bcc4"/>
<path d="M485.40 342.60 h4.4 a3.2 3.2 0 0 1 -4.4 3.2" fill="none" stroke="#14bcc4" stroke-width="1.1"/>
<circle cx="482.80" cy="344.70" r="1.1" fill="#14bcc4"/>
<path d="M480.80 376.60 Q487.46 385.00 494.12 376.60" fill="none" stroke="#14bcc4" stroke-width="1.3"/>
<line x1="480.40" y1="377.40" x2="494.52" y2="377.40" stroke="#5a0c0c" stroke-width="1.60" />
<line x1="480.40" y1="374.90" x2="494.52" y2="374.90" stroke="#0f8e96" stroke-width="0.80" />
<text x="487.46" y="373.80" font-size="2.40" fill="#ffffff" text-anchor="middle" font-weight="bold" font-family="Liberation Sans,Noto Sans CJK SC,sans-serif" stroke="#ffffff" stroke-width="0.32">C</text>
<path d="M510.65 336.90 A4.60 4.60 0 0 0 515.25 341.50" fill="none" stroke="#14bcc4" stroke-width="1"/>
<line x1="515.25" y1="336.90" x2="511.95" y2="340.20" stroke="#14bcc4" stroke-width="0.90" />
<circle cx="513.45" cy="334.30" r="1.1" fill="#14bcc4"/>
<path d="M509.65 342.60 h-4.4 a3.2 3.2 0 0 0 4.4 3.2" fill="none" stroke="#14bcc4" stroke-width="1.1"/>
<circle cx="512.25" cy="344.70" r="1.1" fill="#14bcc4"/>
<path d="M500.92 376.60 Q507.59 385.00 514.25 376.60" fill="none" stroke="#14bcc4" stroke-width="1.3"/>
<line x1="500.52" y1="377.40" x2="514.65" y2="377.40" stroke="#5a0c0c" stroke-width="1.60" />
<line x1="500.52" y1="374.90" x2="514.65" y2="374.90" stroke="#0f8e96" stroke-width="0.80" />
<text x="507.59" y="373.80" font-size="2.40" fill="#ffffff" text-anchor="middle" font-weight="bold" font-family="Liberation Sans,Noto Sans CJK SC,sans-serif" stroke="#ffffff" stroke-width="0.32">C</text>
<path d="M524.65 336.90 A4.60 4.60 0 0 1 520.05 341.50" fill="none" stroke="#14bcc4" stroke-width="1"/>
<line x1="520.05" y1="336.90" x2="523.35" y2="340.20" stroke="#14bcc4" stroke-width="0.90" />
<circle cx="521.85" cy="334.30" r="1.1" fill="#14bcc4"/>
<path d="M525.65 342.60 h4.4 a3.2 3.2 0 0 1 -4.4 3.2" fill="none" stroke="#14bcc4" stroke-width="1.1"/>
<circle cx="523.05" cy="344.70" r="1.1" fill="#14bcc4"/>
<path d="M521.05 376.60 Q527.71 385.00 534.38 376.60" fill="none" stroke="#14bcc4" stroke-width="1.3"/>
<line x1="520.65" y1="377.40" x2="534.77" y2="377.40" stroke="#5a0c0c" stroke-width="1.60" />
<line x1="520.65" y1="374.90" x2="534.77" y2="374.90" stroke="#0f8e96" stroke-width="0.80" />
<text x="527.71" y="373.80" font-size="2.40" fill="#ffffff" text-anchor="middle" font-weight="bold" font-family="Liberation Sans,Noto Sans CJK SC,sans-serif" stroke="#ffffff" stroke-width="0.32">C</text>
<path d="M550.90 336.90 A4.60 4.60 0 0 0 555.50 341.50" fill="none" stroke="#14bcc4" stroke-width="1"/>
<line x1="555.50" y1="336.90" x2="552.20" y2="340.20" stroke="#14bcc4" stroke-width="0.90" />
<circle cx="553.70" cy="334.30" r="1.1" fill="#14bcc4"/>
<path d="M549.90 342.60 h-4.4 a3.2 3.2 0 0 0 4.4 3.2" fill="none" stroke="#14bcc4" stroke-width="1.1"/>
<circle cx="552.50" cy="344.70" r="1.1" fill="#14bcc4"/>
<path d="M541.17 376.60 Q547.84 385.00 554.50 376.60" fill="none" stroke="#14bcc4" stroke-width="1.3"/>
<line x1="540.77" y1="377.40" x2="554.90" y2="377.40" stroke="#5a0c0c" stroke-width="1.60" />
<line x1="540.77" y1="374.90" x2="554.90" y2="374.90" stroke="#0f8e96" stroke-width="0.80" />
<text x="547.84" y="373.80" font-size="2.40" fill="#ffffff" text-anchor="middle" font-weight="bold" font-family="Liberation Sans,Noto Sans CJK SC,sans-serif" stroke="#ffffff" stroke-width="0.32">C</text>
<path d="M564.90 336.90 A4.60 4.60 0 0 1 560.30 341.50" fill="none" stroke="#14bcc4" stroke-width="1"/>
<line x1="560.30" y1="336.90" x2="563.60" y2="340.20" stroke="#14bcc4" stroke-width="0.90" />
<circle cx="562.10" cy="334.30" r="1.1" fill="#14bcc4"/>
<path d="M565.90 342.60 h4.4 a3.2 3.2 0 0 1 -4.4 3.2" fill="none" stroke="#14bcc4" stroke-width="1.1"/>
<circle cx="563.30" cy="344.70" r="1.1" fill="#14bcc4"/>
<path d="M561.30 376.60 Q567.96 385.00 574.62 376.60" fill="none" stroke="#14bcc4" stroke-width="1.3"/>
<line x1="560.90" y1="377.40" x2="575.02" y2="377.40" stroke="#5a0c0c" stroke-width="1.60" />
<line x1="560.90" y1="374.90" x2="575.02" y2="374.90" stroke="#0f8e96" stroke-width="0.80" />
<text x="567.96" y="373.80" font-size="2.40" fill="#ffffff" text-anchor="middle" font-weight="bold" font-family="Liberation Sans,Noto Sans CJK SC,sans-serif" stroke="#ffffff" stroke-width="0.32">C</text>
<path d="M591.15 336.90 A4.60 4.60 0 0 0 595.75 341.50" fill="none" stroke="#14bcc4" stroke-width="1"/>
<line x1="595.75" y1="336.90" x2="592.45" y2="340.20" stroke="#14bcc4" stroke-width="0.90" />
<circle cx="593.95" cy="334.30" r="1.1" fill="#14bcc4"/>
<path d="M590.15 342.60 h-4.4 a3.2 3.2 0 0 0 4.4 3.2" fill="none" stroke="#14bcc4" stroke-width="1.1"/>
<circle cx="592.75" cy="344.70" r="1.1" fill="#14bcc4"/>
<path d="M581.42 376.60 Q588.09 385.00 594.75 376.60" fill="none" stroke="#14bcc4" stroke-width="1.3"/>
<line x1="581.02" y1="377.40" x2="595.15" y2="377.40" stroke="#5a0c0c" stroke-width="1.60" />
<line x1="581.02" y1="374.90" x2="595.15" y2="374.90" stroke="#0f8e96" stroke-width="0.80" />
<text x="588.09" y="373.80" font-size="2.40" fill="#ffffff" text-anchor="middle" font-weight="bold" font-family="Liberation Sans,Noto Sans CJK SC,sans-serif" stroke="#ffffff" stroke-width="0.32">C</text>
<path d="M605.15 336.90 A4.60 4.60 0 0 1 600.55 341.50" fill="none" stroke="#14bcc4" stroke-width="1"/>
<line x1="600.55" y1="336.90" x2="603.85" y2="340.20" stroke="#14bcc4" stroke-width="0.90" />
<circle cx="602.35" cy="334.30" r="1.1" fill="#14bcc4"/>
<path d="M606.15 342.60 h4.4 a3.2 3.2 0 0 1 -4.4 3.2" fill="none" stroke="#14bcc4" stroke-width="1.1"/>
<circle cx="603.55" cy="344.70" r="1.1" fill="#14bcc4"/>
<path d="M601.55 376.60 Q608.21 385.00 614.88 376.60" fill="none" stroke="#14bcc4" stroke-width="1.3"/>
<line x1="601.15" y1="377.40" x2="615.27" y2="377.40" stroke="#5a0c0c" stroke-width="1.60" />
<line x1="601.15" y1="374.90" x2="615.27" y2="374.90" stroke="#0f8e96" stroke-width="0.80" />
<text x="608.21" y="373.80" font-size="2.40" fill="#ffffff" text-anchor="middle" font-weight="bold" font-family="Liberation Sans,Noto Sans CJK SC,sans-serif" stroke="#ffffff" stroke-width="0.32">C</text>
<path d="M631.40 336.90 A4.60 4.60 0 0 0 636.00 341.50" fill="none" stroke="#14bcc4" stroke-width="1"/>
<line x1="636.00" y1="336.90" x2="632.70" y2="340.20" stroke="#14bcc4" stroke-width="0.90" />
<circle cx="634.20" cy="334.30" r="1.1" fill="#14bcc4"/>
<path d="M630.40 342.60 h-4.4 a3.2 3.2 0 0 0 4.4 3.2" fill="none" stroke="#14bcc4" stroke-width="1.1"/>
<circle cx="633.00" cy="344.70" r="1.1" fill="#14bcc4"/>
<path d="M621.67 376.60 Q628.34 385.00 635.00 376.60" fill="none" stroke="#14bcc4" stroke-width="1.3"/>
<line x1="621.27" y1="377.40" x2="635.40" y2="377.40" stroke="#5a0c0c" stroke-width="1.60" />
<line x1="621.27" y1="374.90" x2="635.40" y2="374.90" stroke="#0f8e96" stroke-width="0.80" />
<text x="628.34" y="373.80" font-size="2.40" fill="#ffffff" text-anchor="middle" font-weight="bold" font-family="Liberation Sans,Noto Sans CJK SC,sans-serif" stroke="#ffffff" stroke-width="0.32">C</text>
<rect x="556.30" y="203.50" width="3.20" height="3.20" fill="#8a8a8a"/>
<rect x="596.55" y="203.50" width="3.20" height="3.20" fill="#8a8a8a"/>
<rect x="636.80" y="203.50" width="3.20" height="3.20" fill="#8a8a8a"/>
<rect x="516.05" y="223.80" width="3.20" height="3.20" fill="#8a8a8a"/>
<rect x="536.17" y="223.80" width="3.20" height="3.20" fill="#8a8a8a"/>
<rect x="556.30" y="223.80" width="3.20" height="3.20" fill="#8a8a8a"/>
<rect x="636.80" y="223.80" width="3.20" height="3.20" fill="#8a8a8a"/>
<rect x="495.92" y="243.90" width="3.20" height="3.20" fill="#8a8a8a"/>
<rect x="516.05" y="243.90" width="3.20" height="3.20" fill="#8a8a8a"/>
<rect x="556.30" y="243.90" width="3.20" height="3.20" fill="#8a8a8a"/>
<rect x="596.55" y="243.90" width="3.20" height="3.20" fill="#8a8a8a"/>
<rect x="636.80" y="243.90" width="3.20" height="3.20" fill="#8a8a8a"/>
<rect x="495.92" y="283.90" width="3.20" height="3.20" fill="#8a8a8a"/>
<rect x="516.05" y="283.90" width="3.20" height="3.20" fill="#8a8a8a"/>
<rect x="556.30" y="283.90" width="3.20" height="3.20" fill="#8a8a8a"/>
<rect x="596.55" y="283.90" width="3.20" height="3.20" fill="#8a8a8a"/>
<rect x="636.80" y="283.90" width="3.20" height="3.20" fill="#8a8a8a"/>
<rect x="475.80" y="322.80" width="3.20" height="3.20" fill="#8a8a8a"/>
<rect x="495.92" y="322.80" width="3.20" height="3.20" fill="#8a8a8a"/>
<rect x="516.05" y="322.80" width="3.20" height="3.20" fill="#8a8a8a"/>
<rect x="556.30" y="322.80" width="3.20" height="3.20" fill="#8a8a8a"/>
<rect x="596.55" y="322.80" width="3.20" height="3.20" fill="#8a8a8a"/>
<rect x="636.80" y="322.80" width="3.20" height="3.20" fill="#8a8a8a"/>
<rect x="475.80" y="348.00" width="3.20" height="3.20" fill="#8a8a8a"/>
<rect x="495.92" y="348.00" width="3.20" height="3.20" fill="#8a8a8a"/>
<rect x="516.05" y="348.00" width="3.20" height="3.20" fill="#8a8a8a"/>
<rect x="556.30" y="348.00" width="3.20" height="3.20" fill="#8a8a8a"/>
<rect x="596.55" y="348.00" width="3.20" height="3.20" fill="#8a8a8a"/>
<rect x="636.80" y="348.00" width="3.20" height="3.20" fill="#8a8a8a"/>
<rect x="475.80" y="374.40" width="3.20" height="3.20" fill="#8a8a8a"/>
<rect x="495.92" y="374.40" width="3.20" height="3.20" fill="#8a8a8a"/>
<rect x="516.05" y="374.40" width="3.20" height="3.20" fill="#8a8a8a"/>
<rect x="556.30" y="374.40" width="3.20" height="3.20" fill="#8a8a8a"/>
<rect x="596.55" y="374.40" width="3.20" height="3.20" fill="#8a8a8a"/>
<rect x="636.80" y="374.40" width="3.20" height="3.20" fill="#8a8a8a"/>
<rect x="475.80" y="334.90" width="3.20" height="3.20" fill="#8a8a8a"/>
<rect x="636.80" y="334.90" width="3.20" height="3.20" fill="#8a8a8a"/>
<rect x="637.10" y="306.10" width="2.60" height="2.60" fill="#8a8a8a"/>
<path d="M646.7 286.2 V297 A4.4 4.4 0 0 1 646.7 305.8 V325.4 A4.4 4.4 0 0 1 646.7 334.2 V336.4 H640" fill="none" stroke="#12c412" stroke-width="0.8"/>
<circle cx="477.40" cy="167.9" r="2.4" fill="none" stroke="#12c412" stroke-width="1"/>
<line x1="477.40" y1="170.10" x2="477.40" y2="190.30" stroke="#12c412" stroke-width="1.00" />
<circle cx="497.52" cy="167.9" r="2.4" fill="none" stroke="#12c412" stroke-width="1"/>
<line x1="497.52" y1="170.10" x2="497.52" y2="190.30" stroke="#12c412" stroke-width="1.00" />
<circle cx="517.65" cy="167.9" r="2.4" fill="none" stroke="#12c412" stroke-width="1"/>
<line x1="517.65" y1="170.10" x2="517.65" y2="190.30" stroke="#12c412" stroke-width="1.00" />
<circle cx="537.77" cy="167.9" r="2.4" fill="none" stroke="#12c412" stroke-width="1"/>
<line x1="537.77" y1="170.10" x2="537.77" y2="190.30" stroke="#12c412" stroke-width="1.00" />
<circle cx="557.90" cy="167.9" r="2.4" fill="none" stroke="#12c412" stroke-width="1"/>
<line x1="557.90" y1="170.10" x2="557.90" y2="190.30" stroke="#12c412" stroke-width="1.00" />
<circle cx="578.02" cy="167.9" r="2.4" fill="none" stroke="#12c412" stroke-width="1"/>
<line x1="578.02" y1="170.10" x2="578.02" y2="190.30" stroke="#12c412" stroke-width="1.00" />
<circle cx="598.15" cy="167.9" r="2.4" fill="none" stroke="#12c412" stroke-width="1"/>
<line x1="598.15" y1="170.10" x2="598.15" y2="190.30" stroke="#12c412" stroke-width="1.00" />
<circle cx="618.27" cy="167.9" r="2.4" fill="none" stroke="#12c412" stroke-width="1"/>
<line x1="618.27" y1="170.10" x2="618.27" y2="190.30" stroke="#12c412" stroke-width="1.00" />
<circle cx="638.40" cy="167.9" r="2.4" fill="none" stroke="#12c412" stroke-width="1"/>
<line x1="638.40" y1="170.10" x2="638.40" y2="190.30" stroke="#12c412" stroke-width="1.00" />
<circle cx="606.20" cy="167.9" r="2.4" fill="none" stroke="#12c412" stroke-width="1"/>
<line x1="606.20" y1="170.10" x2="606.20" y2="190.30" stroke="#12c412" stroke-width="1.00" />
<text x="477.40" y="168.90" font-size="2.80" fill="#38e038" text-anchor="middle" font-weight="bold" font-family="Liberation Sans,Noto Sans CJK SC,sans-serif" >1</text>
<text x="497.52" y="168.90" font-size="2.80" fill="#38e038" text-anchor="middle" font-weight="bold" font-family="Liberation Sans,Noto Sans CJK SC,sans-serif" >2</text>
<text x="517.65" y="168.90" font-size="2.80" fill="#38e038" text-anchor="middle" font-weight="bold" font-family="Liberation Sans,Noto Sans CJK SC,sans-serif" >3</text>
<text x="537.77" y="168.90" font-size="2.80" fill="#38e038" text-anchor="middle" font-weight="bold" font-family="Liberation Sans,Noto Sans CJK SC,sans-serif" >4</text>
<text x="557.90" y="168.90" font-size="2.80" fill="#38e038" text-anchor="middle" font-weight="bold" font-family="Liberation Sans,Noto Sans CJK SC,sans-serif" >5</text>
<text x="578.02" y="168.90" font-size="2.80" fill="#38e038" text-anchor="middle" font-weight="bold" font-family="Liberation Sans,Noto Sans CJK SC,sans-serif" >6</text>
<text x="598.15" y="168.90" font-size="2.80" fill="#38e038" text-anchor="middle" font-weight="bold" font-family="Liberation Sans,Noto Sans CJK SC,sans-serif" >7</text>
<text x="618.27" y="168.90" font-size="2.80" fill="#38e038" text-anchor="middle" font-weight="bold" font-family="Liberation Sans,Noto Sans CJK SC,sans-serif" >8</text>
<text x="638.40" y="168.90" font-size="2.80" fill="#38e038" text-anchor="middle" font-weight="bold" font-family="Liberation Sans,Noto Sans CJK SC,sans-serif" >9</text>
<line x1="477.40" y1="173.90" x2="638.40" y2="173.90" stroke="#12c412" stroke-width="1.20" />
<line x1="477.40" y1="177.70" x2="638.40" y2="177.70" stroke="#12c412" stroke-width="1.20" />
<line x1="517.65" y1="182.40" x2="618.27" y2="182.40" stroke="#12c412" stroke-width="1.20" />
<text x="487.46" y="176.80" font-size="2.50" fill="#ffffff" text-anchor="middle" font-weight="bold" font-family="Liberation Sans,Noto Sans CJK SC,sans-serif" stroke="#ffffff" stroke-width="0.32">3600</text>
<text x="507.59" y="176.80" font-size="2.50" fill="#ffffff" text-anchor="middle" font-weight="bold" font-family="Liberation Sans,Noto Sans CJK SC,sans-serif" stroke="#ffffff" stroke-width="0.32">3600</text>
<text x="527.71" y="176.80" font-size="2.50" fill="#ffffff" text-anchor="middle" font-weight="bold" font-family="Liberation Sans,Noto Sans CJK SC,sans-serif" stroke="#ffffff" stroke-width="0.32">3600</text>
<text x="547.84" y="176.80" font-size="2.50" fill="#ffffff" text-anchor="middle" font-weight="bold" font-family="Liberation Sans,Noto Sans CJK SC,sans-serif" stroke="#ffffff" stroke-width="0.32">3600</text>
<text x="567.96" y="176.80" font-size="2.50" fill="#ffffff" text-anchor="middle" font-weight="bold" font-family="Liberation Sans,Noto Sans CJK SC,sans-serif" stroke="#ffffff" stroke-width="0.32">3600</text>
<text x="588.09" y="176.80" font-size="2.50" fill="#ffffff" text-anchor="middle" font-weight="bold" font-family="Liberation Sans,Noto Sans CJK SC,sans-serif" stroke="#ffffff" stroke-width="0.32">3600</text>
<text x="608.21" y="176.80" font-size="2.50" fill="#ffffff" text-anchor="middle" font-weight="bold" font-family="Liberation Sans,Noto Sans CJK SC,sans-serif" stroke="#ffffff" stroke-width="0.32">3600</text>
<text x="628.34" y="176.80" font-size="2.50" fill="#ffffff" text-anchor="middle" font-weight="bold" font-family="Liberation Sans,Noto Sans CJK SC,sans-serif" stroke="#ffffff" stroke-width="0.32">3600</text>
<text x="557.90" y="172.90" font-size="2.40" fill="#ffffff" text-anchor="middle" font-weight="bold" font-family="Liberation Sans,Noto Sans CJK SC,sans-serif" stroke="#ffffff" stroke-width="0.32">28800</text>
<text x="520.25" y="181.60" font-size="2.20" fill="#ffffff" text-anchor="middle" font-weight="bold" font-family="Liberation Sans,Noto Sans CJK SC,sans-serif" stroke="#ffffff" stroke-width="0.32">900</text>
<text x="527.71" y="181.60" font-size="2.20" fill="#ffffff" text-anchor="middle" font-weight="bold" font-family="Liberation Sans,Noto Sans CJK SC,sans-serif" stroke="#ffffff" stroke-width="0.32">1800</text>
<text x="534.98" y="181.60" font-size="2.20" fill="#ffffff" text-anchor="middle" font-weight="bold" font-family="Liberation Sans,Noto Sans CJK SC,sans-serif" stroke="#ffffff" stroke-width="0.32">900</text>
<text x="540.38" y="181.60" font-size="2.20" fill="#ffffff" text-anchor="middle" font-weight="bold" font-family="Liberation Sans,Noto Sans CJK SC,sans-serif" stroke="#ffffff" stroke-width="0.32">900</text>
<text x="547.84" y="181.60" font-size="2.20" fill="#ffffff" text-anchor="middle" font-weight="bold" font-family="Liberation Sans,Noto Sans CJK SC,sans-serif" stroke="#ffffff" stroke-width="0.32">1800</text>
<text x="555.10" y="181.60" font-size="2.20" fill="#ffffff" text-anchor="middle" font-weight="bold" font-family="Liberation Sans,Noto Sans CJK SC,sans-serif" stroke="#ffffff" stroke-width="0.32">900</text>
<text x="560.50" y="181.60" font-size="2.20" fill="#ffffff" text-anchor="middle" font-weight="bold" font-family="Liberation Sans,Noto Sans CJK SC,sans-serif" stroke="#ffffff" stroke-width="0.32">900</text>
<text x="567.96" y="181.60" font-size="2.20" fill="#ffffff" text-anchor="middle" font-weight="bold" font-family="Liberation Sans,Noto Sans CJK SC,sans-serif" stroke="#ffffff" stroke-width="0.32">1800</text>
<text x="575.23" y="181.60" font-size="2.20" fill="#ffffff" text-anchor="middle" font-weight="bold" font-family="Liberation Sans,Noto Sans CJK SC,sans-serif" stroke="#ffffff" stroke-width="0.32">900</text>
<text x="580.62" y="181.60" font-size="2.20" fill="#ffffff" text-anchor="middle" font-weight="bold" font-family="Liberation Sans,Noto Sans CJK SC,sans-serif" stroke="#ffffff" stroke-width="0.32">900</text>
<text x="588.09" y="181.60" font-size="2.20" fill="#ffffff" text-anchor="middle" font-weight="bold" font-family="Liberation Sans,Noto Sans CJK SC,sans-serif" stroke="#ffffff" stroke-width="0.32">1800</text>
<text x="595.35" y="181.60" font-size="2.20" fill="#ffffff" text-anchor="middle" font-weight="bold" font-family="Liberation Sans,Noto Sans CJK SC,sans-serif" stroke="#ffffff" stroke-width="0.32">900</text>
<text x="600.75" y="181.60" font-size="2.20" fill="#ffffff" text-anchor="middle" font-weight="bold" font-family="Liberation Sans,Noto Sans CJK SC,sans-serif" stroke="#ffffff" stroke-width="0.32">900</text>
<text x="608.21" y="181.60" font-size="2.20" fill="#ffffff" text-anchor="middle" font-weight="bold" font-family="Liberation Sans,Noto Sans CJK SC,sans-serif" stroke="#ffffff" stroke-width="0.32">1800</text>
<text x="615.48" y="181.60" font-size="2.20" fill="#ffffff" text-anchor="middle" font-weight="bold" font-family="Liberation Sans,Noto Sans CJK SC,sans-serif" stroke="#ffffff" stroke-width="0.32">900</text>
<circle cx="477.40" cy="413.3" r="2.4" fill="none" stroke="#12c412" stroke-width="1"/>
<line x1="477.40" y1="390.80" x2="477.40" y2="411.10" stroke="#12c412" stroke-width="1.00" />
<text x="477.40" y="414.30" font-size="2.80" fill="#38e038" text-anchor="middle" font-weight="bold" font-family="Liberation Sans,Noto Sans CJK SC,sans-serif" >1</text>
<circle cx="497.52" cy="413.3" r="2.4" fill="none" stroke="#12c412" stroke-width="1"/>
<line x1="497.52" y1="390.80" x2="497.52" y2="411.10" stroke="#12c412" stroke-width="1.00" />
<text x="497.52" y="414.30" font-size="2.80" fill="#38e038" text-anchor="middle" font-weight="bold" font-family="Liberation Sans,Noto Sans CJK SC,sans-serif" >2</text>
<circle cx="517.65" cy="413.3" r="2.4" fill="none" stroke="#12c412" stroke-width="1"/>
<line x1="517.65" y1="390.80" x2="517.65" y2="411.10" stroke="#12c412" stroke-width="1.00" />
<text x="517.65" y="414.30" font-size="2.80" fill="#38e038" text-anchor="middle" font-weight="bold" font-family="Liberation Sans,Noto Sans CJK SC,sans-serif" >3</text>
<circle cx="537.77" cy="413.3" r="2.4" fill="none" stroke="#12c412" stroke-width="1"/>
<line x1="537.77" y1="390.80" x2="537.77" y2="411.10" stroke="#12c412" stroke-width="1.00" />
<text x="537.77" y="414.30" font-size="2.80" fill="#38e038" text-anchor="middle" font-weight="bold" font-family="Liberation Sans,Noto Sans CJK SC,sans-serif" >4</text>
<circle cx="557.90" cy="413.3" r="2.4" fill="none" stroke="#12c412" stroke-width="1"/>
<line x1="557.90" y1="390.80" x2="557.90" y2="411.10" stroke="#12c412" stroke-width="1.00" />
<text x="557.90" y="414.30" font-size="2.80" fill="#38e038" text-anchor="middle" font-weight="bold" font-family="Liberation Sans,Noto Sans CJK SC,sans-serif" >5</text>
<circle cx="578.02" cy="413.3" r="2.4" fill="none" stroke="#12c412" stroke-width="1"/>
<line x1="578.02" y1="390.80" x2="578.02" y2="411.10" stroke="#12c412" stroke-width="1.00" />
<text x="578.02" y="414.30" font-size="2.80" fill="#38e038" text-anchor="middle" font-weight="bold" font-family="Liberation Sans,Noto Sans CJK SC,sans-serif" >6</text>
<circle cx="598.15" cy="413.3" r="2.4" fill="none" stroke="#12c412" stroke-width="1"/>
<line x1="598.15" y1="390.80" x2="598.15" y2="411.10" stroke="#12c412" stroke-width="1.00" />
<text x="598.15" y="414.30" font-size="2.80" fill="#38e038" text-anchor="middle" font-weight="bold" font-family="Liberation Sans,Noto Sans CJK SC,sans-serif" >7</text>
<circle cx="618.27" cy="413.3" r="2.4" fill="none" stroke="#12c412" stroke-width="1"/>
<line x1="618.27" y1="390.80" x2="618.27" y2="411.10" stroke="#12c412" stroke-width="1.00" />
<text x="618.27" y="414.30" font-size="2.80" fill="#38e038" text-anchor="middle" font-weight="bold" font-family="Liberation Sans,Noto Sans CJK SC,sans-serif" >8</text>
<circle cx="638.40" cy="413.3" r="2.4" fill="none" stroke="#12c412" stroke-width="1"/>
<line x1="638.40" y1="390.80" x2="638.40" y2="411.10" stroke="#12c412" stroke-width="1.00" />
<text x="638.40" y="414.30" font-size="2.80" fill="#38e038" text-anchor="middle" font-weight="bold" font-family="Liberation Sans,Noto Sans CJK SC,sans-serif" >9</text>
<line x1="477.40" y1="399.70" x2="638.40" y2="399.70" stroke="#12c412" stroke-width="1.20" />
<line x1="477.40" y1="404.20" x2="638.40" y2="404.20" stroke="#12c412" stroke-width="1.20" />
<line x1="477.40" y1="408.00" x2="638.40" y2="408.00" stroke="#12c412" stroke-width="1.20" />
<text x="479.80" y="398.80" font-size="2.20" fill="#ffffff" text-anchor="middle" font-weight="bold" font-family="Liberation Sans,Noto Sans CJK SC,sans-serif" stroke="#ffffff" stroke-width="0.32">900</text>
<text x="487.46" y="398.80" font-size="2.20" fill="#ffffff" text-anchor="middle" font-weight="bold" font-family="Liberation Sans,Noto Sans CJK SC,sans-serif" stroke="#ffffff" stroke-width="0.32">1800</text>
<text x="494.92" y="398.80" font-size="2.20" fill="#ffffff" text-anchor="middle" font-weight="bold" font-family="Liberation Sans,Noto Sans CJK SC,sans-serif" stroke="#ffffff" stroke-width="0.32">900</text>
<text x="487.46" y="403.30" font-size="2.50" fill="#ffffff" text-anchor="middle" font-weight="bold" font-family="Liberation Sans,Noto Sans CJK SC,sans-serif" stroke="#ffffff" stroke-width="0.32">3600</text>
<text x="499.92" y="398.80" font-size="2.20" fill="#ffffff" text-anchor="middle" font-weight="bold" font-family="Liberation Sans,Noto Sans CJK SC,sans-serif" stroke="#ffffff" stroke-width="0.32">900</text>
<text x="507.59" y="398.80" font-size="2.20" fill="#ffffff" text-anchor="middle" font-weight="bold" font-family="Liberation Sans,Noto Sans CJK SC,sans-serif" stroke="#ffffff" stroke-width="0.32">1800</text>
<text x="515.05" y="398.80" font-size="2.20" fill="#ffffff" text-anchor="middle" font-weight="bold" font-family="Liberation Sans,Noto Sans CJK SC,sans-serif" stroke="#ffffff" stroke-width="0.32">900</text>
<text x="507.59" y="403.30" font-size="2.50" fill="#ffffff" text-anchor="middle" font-weight="bold" font-family="Liberation Sans,Noto Sans CJK SC,sans-serif" stroke="#ffffff" stroke-width="0.32">3600</text>
<text x="520.05" y="398.80" font-size="2.20" fill="#ffffff" text-anchor="middle" font-weight="bold" font-family="Liberation Sans,Noto Sans CJK SC,sans-serif" stroke="#ffffff" stroke-width="0.32">900</text>
<text x="527.71" y="398.80" font-size="2.20" fill="#ffffff" text-anchor="middle" font-weight="bold" font-family="Liberation Sans,Noto Sans CJK SC,sans-serif" stroke="#ffffff" stroke-width="0.32">1800</text>
<text x="535.17" y="398.80" font-size="2.20" fill="#ffffff" text-anchor="middle" font-weight="bold" font-family="Liberation Sans,Noto Sans CJK SC,sans-serif" stroke="#ffffff" stroke-width="0.32">900</text>
<text x="527.71" y="403.30" font-size="2.50" fill="#ffffff" text-anchor="middle" font-weight="bold" font-family="Liberation Sans,Noto Sans CJK SC,sans-serif" stroke="#ffffff" stroke-width="0.32">3600</text>
<text x="540.17" y="398.80" font-size="2.20" fill="#ffffff" text-anchor="middle" font-weight="bold" font-family="Liberation Sans,Noto Sans CJK SC,sans-serif" stroke="#ffffff" stroke-width="0.32">900</text>
<text x="547.84" y="398.80" font-size="2.20" fill="#ffffff" text-anchor="middle" font-weight="bold" font-family="Liberation Sans,Noto Sans CJK SC,sans-serif" stroke="#ffffff" stroke-width="0.32">1800</text>
<text x="555.30" y="398.80" font-size="2.20" fill="#ffffff" text-anchor="middle" font-weight="bold" font-family="Liberation Sans,Noto Sans CJK SC,sans-serif" stroke="#ffffff" stroke-width="0.32">900</text>
<text x="547.84" y="403.30" font-size="2.50" fill="#ffffff" text-anchor="middle" font-weight="bold" font-family="Liberation Sans,Noto Sans CJK SC,sans-serif" stroke="#ffffff" stroke-width="0.32">3600</text>
<text x="560.30" y="398.80" font-size="2.20" fill="#ffffff" text-anchor="middle" font-weight="bold" font-family="Liberation Sans,Noto Sans CJK SC,sans-serif" stroke="#ffffff" stroke-width="0.32">900</text>
<text x="567.96" y="398.80" font-size="2.20" fill="#ffffff" text-anchor="middle" font-weight="bold" font-family="Liberation Sans,Noto Sans CJK SC,sans-serif" stroke="#ffffff" stroke-width="0.32">1800</text>
<text x="575.42" y="398.80" font-size="2.20" fill="#ffffff" text-anchor="middle" font-weight="bold" font-family="Liberation Sans,Noto Sans CJK SC,sans-serif" stroke="#ffffff" stroke-width="0.32">900</text>
<text x="567.96" y="403.30" font-size="2.50" fill="#ffffff" text-anchor="middle" font-weight="bold" font-family="Liberation Sans,Noto Sans CJK SC,sans-serif" stroke="#ffffff" stroke-width="0.32">3600</text>
<text x="580.42" y="398.80" font-size="2.20" fill="#ffffff" text-anchor="middle" font-weight="bold" font-family="Liberation Sans,Noto Sans CJK SC,sans-serif" stroke="#ffffff" stroke-width="0.32">900</text>
<text x="588.09" y="398.80" font-size="2.20" fill="#ffffff" text-anchor="middle" font-weight="bold" font-family="Liberation Sans,Noto Sans CJK SC,sans-serif" stroke="#ffffff" stroke-width="0.32">1800</text>
<text x="595.55" y="398.80" font-size="2.20" fill="#ffffff" text-anchor="middle" font-weight="bold" font-family="Liberation Sans,Noto Sans CJK SC,sans-serif" stroke="#ffffff" stroke-width="0.32">900</text>
<text x="588.09" y="403.30" font-size="2.50" fill="#ffffff" text-anchor="middle" font-weight="bold" font-family="Liberation Sans,Noto Sans CJK SC,sans-serif" stroke="#ffffff" stroke-width="0.32">3600</text>
<text x="600.55" y="398.80" font-size="2.20" fill="#ffffff" text-anchor="middle" font-weight="bold" font-family="Liberation Sans,Noto Sans CJK SC,sans-serif" stroke="#ffffff" stroke-width="0.32">900</text>
<text x="608.21" y="398.80" font-size="2.20" fill="#ffffff" text-anchor="middle" font-weight="bold" font-family="Liberation Sans,Noto Sans CJK SC,sans-serif" stroke="#ffffff" stroke-width="0.32">1800</text>
<text x="615.67" y="398.80" font-size="2.20" fill="#ffffff" text-anchor="middle" font-weight="bold" font-family="Liberation Sans,Noto Sans CJK SC,sans-serif" stroke="#ffffff" stroke-width="0.32">900</text>
<text x="608.21" y="403.30" font-size="2.50" fill="#ffffff" text-anchor="middle" font-weight="bold" font-family="Liberation Sans,Noto Sans CJK SC,sans-serif" stroke="#ffffff" stroke-width="0.32">3600</text>
<text x="620.67" y="398.80" font-size="2.20" fill="#ffffff" text-anchor="middle" font-weight="bold" font-family="Liberation Sans,Noto Sans CJK SC,sans-serif" stroke="#ffffff" stroke-width="0.32">900</text>
<text x="628.34" y="398.80" font-size="2.20" fill="#ffffff" text-anchor="middle" font-weight="bold" font-family="Liberation Sans,Noto Sans CJK SC,sans-serif" stroke="#ffffff" stroke-width="0.32">1800</text>
<text x="635.80" y="398.80" font-size="2.20" fill="#ffffff" text-anchor="middle" font-weight="bold" font-family="Liberation Sans,Noto Sans CJK SC,sans-serif" stroke="#ffffff" stroke-width="0.32">900</text>
<text x="628.34" y="403.30" font-size="2.50" fill="#ffffff" text-anchor="middle" font-weight="bold" font-family="Liberation Sans,Noto Sans CJK SC,sans-serif" stroke="#ffffff" stroke-width="0.32">3600</text>
<text x="557.90" y="407.20" font-size="2.40" fill="#ffffff" text-anchor="middle" font-weight="bold" font-family="Liberation Sans,Noto Sans CJK SC,sans-serif" stroke="#ffffff" stroke-width="0.32">28800</text>
<circle cx="430" cy="205.10" r="2.4" fill="none" stroke="#12c412" stroke-width="1"/>
<line x1="432.20" y1="205.10" x2="452.20" y2="205.10" stroke="#12c412" stroke-width="1.00" />
<text x="430.00" y="206.10" font-size="2.80" fill="#38e038" text-anchor="middle" font-weight="bold" font-family="Liberation Sans,Noto Sans CJK SC,sans-serif" >J</text>
<circle cx="430" cy="225.40" r="2.4" fill="none" stroke="#12c412" stroke-width="1"/>
<line x1="432.20" y1="225.40" x2="452.20" y2="225.40" stroke="#12c412" stroke-width="1.00" />
<text x="430.00" y="226.40" font-size="2.80" fill="#38e038" text-anchor="middle" font-weight="bold" font-family="Liberation Sans,Noto Sans CJK SC,sans-serif" >H</text>
<circle cx="430" cy="245.50" r="2.4" fill="none" stroke="#12c412" stroke-width="1"/>
<line x1="432.20" y1="245.50" x2="452.20" y2="245.50" stroke="#12c412" stroke-width="1.00" />
<text x="430.00" y="246.50" font-size="2.80" fill="#38e038" text-anchor="middle" font-weight="bold" font-family="Liberation Sans,Noto Sans CJK SC,sans-serif" >G</text>
<circle cx="430" cy="285.50" r="2.4" fill="none" stroke="#12c412" stroke-width="1"/>
<line x1="432.20" y1="285.50" x2="452.20" y2="285.50" stroke="#12c412" stroke-width="1.00" />
<text x="430.00" y="286.50" font-size="2.80" fill="#38e038" text-anchor="middle" font-weight="bold" font-family="Liberation Sans,Noto Sans CJK SC,sans-serif" >F</text>
<circle cx="430" cy="307.40" r="2.4" fill="none" stroke="#12c412" stroke-width="1"/>
<line x1="432.20" y1="307.40" x2="452.20" y2="307.40" stroke="#12c412" stroke-width="1.00" />
<text x="430.00" y="308.40" font-size="2.80" fill="#38e038" text-anchor="middle" font-weight="bold" font-family="Liberation Sans,Noto Sans CJK SC,sans-serif" >E</text>
<circle cx="430" cy="311.50" r="2.4" fill="none" stroke="#12c412" stroke-width="1"/>
<line x1="432.20" y1="311.50" x2="452.20" y2="311.50" stroke="#12c412" stroke-width="1.00" />
<text x="430.00" y="312.50" font-size="2.80" fill="#38e038" text-anchor="middle" font-weight="bold" font-family="Liberation Sans,Noto Sans CJK SC,sans-serif" >D</text>
<circle cx="430" cy="324.40" r="2.4" fill="none" stroke="#12c412" stroke-width="1"/>
<line x1="432.20" y1="324.40" x2="452.20" y2="324.40" stroke="#12c412" stroke-width="1.00" />
<text x="430.00" y="325.40" font-size="2.80" fill="#38e038" text-anchor="middle" font-weight="bold" font-family="Liberation Sans,Noto Sans CJK SC,sans-serif" >C</text>
<circle cx="430" cy="336.50" r="2.4" fill="none" stroke="#12c412" stroke-width="1"/>
<line x1="432.20" y1="336.50" x2="452.20" y2="336.50" stroke="#12c412" stroke-width="1.00" />
<text x="430.00" y="337.50" font-size="2.80" fill="#38e038" text-anchor="middle" font-weight="bold" font-family="Liberation Sans,Noto Sans CJK SC,sans-serif" >B</text>
<circle cx="430" cy="349.60" r="2.4" fill="none" stroke="#12c412" stroke-width="1"/>
<line x1="432.20" y1="349.60" x2="452.20" y2="349.60" stroke="#12c412" stroke-width="1.00" />
<text x="430.00" y="350.60" font-size="2.80" fill="#38e038" text-anchor="middle" font-weight="bold" font-family="Liberation Sans,Noto Sans CJK SC,sans-serif" >A</text>
<circle cx="430" cy="376.00" r="2.4" fill="none" stroke="#12c412" stroke-width="1"/>
<line x1="432.20" y1="376.00" x2="452.20" y2="376.00" stroke="#12c412" stroke-width="1.00" />
<text x="430.00" y="377.00" font-size="2.80" fill="#38e038" text-anchor="middle" font-weight="bold" font-family="Liberation Sans,Noto Sans CJK SC,sans-serif" >1</text>
<line x1="435.50" y1="205.10" x2="435.50" y2="376.00" stroke="#12c412" stroke-width="0.90" />
<line x1="439.50" y1="205.10" x2="439.50" y2="376.00" stroke="#12c412" stroke-width="0.90" />
<line x1="443.60" y1="245.50" x2="443.60" y2="349.60" stroke="#12c412" stroke-width="1.00" />
<text x="0" y="0" font-size="2.4" fill="#fff" stroke="#fff" stroke-width="0.3" font-weight="bold" text-anchor="middle" font-family="Liberation Sans,sans-serif" transform="translate(438.6 215.25) rotate(-90)">3600</text>
<text x="0" y="0" font-size="2.4" fill="#fff" stroke="#fff" stroke-width="0.3" font-weight="bold" text-anchor="middle" font-family="Liberation Sans,sans-serif" transform="translate(438.6 235.45) rotate(-90)">3600</text>
<text x="0" y="0" font-size="2.4" fill="#fff" stroke="#fff" stroke-width="0.3" font-weight="bold" text-anchor="middle" font-family="Liberation Sans,sans-serif" transform="translate(438.6 265.50) rotate(-90)">3600</text>
<text x="0" y="0" font-size="2.4" fill="#fff" stroke="#fff" stroke-width="0.3" font-weight="bold" text-anchor="middle" font-family="Liberation Sans,sans-serif" transform="translate(438.6 296.45) rotate(-90)">3600</text>
<text x="0" y="0" font-size="2.4" fill="#fff" stroke="#fff" stroke-width="0.3" font-weight="bold" text-anchor="middle" font-family="Liberation Sans,sans-serif" transform="translate(438.6 317.95) rotate(-90)">3600</text>
<text x="0" y="0" font-size="2.4" fill="#fff" stroke="#fff" stroke-width="0.3" font-weight="bold" text-anchor="middle" font-family="Liberation Sans,sans-serif" transform="translate(438.6 330.45) rotate(-90)">3600</text>
<text x="0" y="0" font-size="2.4" fill="#fff" stroke="#fff" stroke-width="0.3" font-weight="bold" text-anchor="middle" font-family="Liberation Sans,sans-serif" transform="translate(438.6 343.05) rotate(-90)">3600</text>
<text x="0" y="0" font-size="2.4" fill="#fff" stroke="#fff" stroke-width="0.3" font-weight="bold" text-anchor="middle" font-family="Liberation Sans,sans-serif" transform="translate(438.6 362.80) rotate(-90)">3600</text>
<text x="0" y="0" font-size="2.1" fill="#fff" stroke="#fff" stroke-width="0.3" font-weight="bold" text-anchor="middle" font-family="Liberation Sans,sans-serif" transform="translate(442.8 248.00) rotate(-90)">900</text>
<line x1="442.20" y1="250.20" x2="447.00" y2="250.20" stroke="#12c412" stroke-width="0.60" />
<text x="0" y="0" font-size="2.1" fill="#fff" stroke="#fff" stroke-width="0.3" font-weight="bold" text-anchor="middle" font-family="Liberation Sans,sans-serif" transform="translate(442.8 252.00) rotate(-90)">900</text>
<line x1="442.20" y1="254.20" x2="447.00" y2="254.20" stroke="#12c412" stroke-width="0.60" />
<text x="0" y="0" font-size="2.1" fill="#fff" stroke="#fff" stroke-width="0.3" font-weight="bold" text-anchor="middle" font-family="Liberation Sans,sans-serif" transform="translate(442.8 256.00) rotate(-90)">900</text>
<line x1="442.20" y1="258.20" x2="447.00" y2="258.20" stroke="#12c412" stroke-width="0.60" />
<text x="0" y="0" font-size="2.1" fill="#fff" stroke="#fff" stroke-width="0.3" font-weight="bold" text-anchor="middle" font-family="Liberation Sans,sans-serif" transform="translate(442.8 264.00) rotate(-90)">900</text>
<line x1="442.20" y1="266.20" x2="447.00" y2="266.20" stroke="#12c412" stroke-width="0.60" />
<text x="0" y="0" font-size="2.1" fill="#fff" stroke="#fff" stroke-width="0.3" font-weight="bold" text-anchor="middle" font-family="Liberation Sans,sans-serif" transform="translate(442.8 270.00) rotate(-90)">900</text>
<line x1="442.20" y1="272.20" x2="447.00" y2="272.20" stroke="#12c412" stroke-width="0.60" />
<text x="0" y="0" font-size="2.1" fill="#fff" stroke="#fff" stroke-width="0.3" font-weight="bold" text-anchor="middle" font-family="Liberation Sans,sans-serif" transform="translate(442.8 278.00) rotate(-90)">900</text>
<line x1="442.20" y1="280.20" x2="447.00" y2="280.20" stroke="#12c412" stroke-width="0.60" />
<text x="0" y="0" font-size="2.1" fill="#fff" stroke="#fff" stroke-width="0.3" font-weight="bold" text-anchor="middle" font-family="Liberation Sans,sans-serif" transform="translate(442.8 283.00) rotate(-90)">900</text>
<line x1="442.20" y1="285.20" x2="447.00" y2="285.20" stroke="#12c412" stroke-width="0.60" />
<text x="0" y="0" font-size="2.1" fill="#fff" stroke="#fff" stroke-width="0.3" font-weight="bold" text-anchor="middle" font-family="Liberation Sans,sans-serif" transform="translate(442.8 290.00) rotate(-90)">900</text>
<line x1="442.20" y1="292.20" x2="447.00" y2="292.20" stroke="#12c412" stroke-width="0.60" />
<text x="0" y="0" font-size="2.1" fill="#fff" stroke="#fff" stroke-width="0.3" font-weight="bold" text-anchor="middle" font-family="Liberation Sans,sans-serif" transform="translate(442.8 296.00) rotate(-90)">900</text>
<line x1="442.20" y1="298.20" x2="447.00" y2="298.20" stroke="#12c412" stroke-width="0.60" />
<text x="0" y="0" font-size="2.1" fill="#fff" stroke="#fff" stroke-width="0.3" font-weight="bold" text-anchor="middle" font-family="Liberation Sans,sans-serif" transform="translate(442.8 302.00) rotate(-90)">900</text>
<line x1="442.20" y1="304.20" x2="447.00" y2="304.20" stroke="#12c412" stroke-width="0.60" />
<text x="0" y="0" font-size="2.1" fill="#fff" stroke="#fff" stroke-width="0.3" font-weight="bold" text-anchor="middle" font-family="Liberation Sans,sans-serif" transform="translate(442.8 309.00) rotate(-90)">900</text>
<line x1="442.20" y1="311.20" x2="447.00" y2="311.20" stroke="#12c412" stroke-width="0.60" />
<text x="0" y="0" font-size="2.1" fill="#fff" stroke="#fff" stroke-width="0.3" font-weight="bold" text-anchor="middle" font-family="Liberation Sans,sans-serif" transform="translate(442.8 315.00) rotate(-90)">900</text>
<line x1="442.20" y1="317.20" x2="447.00" y2="317.20" stroke="#12c412" stroke-width="0.60" />
<text x="0" y="0" font-size="2.1" fill="#fff" stroke="#fff" stroke-width="0.3" font-weight="bold" text-anchor="middle" font-family="Liberation Sans,sans-serif" transform="translate(442.8 320.00) rotate(-90)">900</text>
<line x1="442.20" y1="322.20" x2="447.00" y2="322.20" stroke="#12c412" stroke-width="0.60" />
<text x="0" y="0" font-size="2.1" fill="#fff" stroke="#fff" stroke-width="0.3" font-weight="bold" text-anchor="middle" font-family="Liberation Sans,sans-serif" transform="translate(442.8 328.00) rotate(-90)">900</text>
<line x1="442.20" y1="330.20" x2="447.00" y2="330.20" stroke="#12c412" stroke-width="0.60" />
<text x="0" y="0" font-size="2.1" fill="#fff" stroke="#fff" stroke-width="0.3" font-weight="bold" text-anchor="middle" font-family="Liberation Sans,sans-serif" transform="translate(442.8 333.00) rotate(-90)">900</text>
<line x1="442.20" y1="335.20" x2="447.00" y2="335.20" stroke="#12c412" stroke-width="0.60" />
<text x="0" y="0" font-size="2.1" fill="#fff" stroke="#fff" stroke-width="0.3" font-weight="bold" text-anchor="middle" font-family="Liberation Sans,sans-serif" transform="translate(442.8 341.00) rotate(-90)">900</text>
<line x1="442.20" y1="343.20" x2="447.00" y2="343.20" stroke="#12c412" stroke-width="0.60" />
<text x="0" y="0" font-size="2.4" fill="#fff" stroke="#fff" stroke-width="0.3" font-weight="bold" text-anchor="middle" font-family="Liberation Sans,sans-serif" transform="translate(434.6 290) rotate(-90)">17100</text>
<circle cx="675.4" cy="205.10" r="2.4" fill="none" stroke="#12c412" stroke-width="1"/>
<line x1="653.00" y1="205.10" x2="673.20" y2="205.10" stroke="#12c412" stroke-width="1.00" />
<text x="675.40" y="206.10" font-size="2.80" fill="#38e038" text-anchor="middle" font-weight="bold" font-family="Liberation Sans,Noto Sans CJK SC,sans-serif" >J</text>
<circle cx="675.4" cy="225.40" r="2.4" fill="none" stroke="#12c412" stroke-width="1"/>
<line x1="653.00" y1="225.40" x2="673.20" y2="225.40" stroke="#12c412" stroke-width="1.00" />
<text x="675.40" y="226.40" font-size="2.80" fill="#38e038" text-anchor="middle" font-weight="bold" font-family="Liberation Sans,Noto Sans CJK SC,sans-serif" >H</text>
<circle cx="675.4" cy="245.50" r="2.4" fill="none" stroke="#12c412" stroke-width="1"/>
<line x1="653.00" y1="245.50" x2="673.20" y2="245.50" stroke="#12c412" stroke-width="1.00" />
<text x="675.40" y="246.50" font-size="2.80" fill="#38e038" text-anchor="middle" font-weight="bold" font-family="Liberation Sans,Noto Sans CJK SC,sans-serif" >G</text>
<circle cx="675.4" cy="285.50" r="2.4" fill="none" stroke="#12c412" stroke-width="1"/>
<line x1="653.00" y1="285.50" x2="673.20" y2="285.50" stroke="#12c412" stroke-width="1.00" />
<text x="675.40" y="286.50" font-size="2.80" fill="#38e038" text-anchor="middle" font-weight="bold" font-family="Liberation Sans,Noto Sans CJK SC,sans-serif" >F</text>
<circle cx="675.4" cy="307.40" r="2.4" fill="none" stroke="#12c412" stroke-width="1"/>
<line x1="653.00" y1="307.40" x2="673.20" y2="307.40" stroke="#12c412" stroke-width="1.00" />
<text x="675.40" y="308.40" font-size="2.80" fill="#38e038" text-anchor="middle" font-weight="bold" font-family="Liberation Sans,Noto Sans CJK SC,sans-serif" >E</text>
<circle cx="675.4" cy="324.40" r="2.4" fill="none" stroke="#12c412" stroke-width="1"/>
<line x1="653.00" y1="324.40" x2="673.20" y2="324.40" stroke="#12c412" stroke-width="1.00" />
<text x="675.40" y="325.40" font-size="2.80" fill="#38e038" text-anchor="middle" font-weight="bold" font-family="Liberation Sans,Noto Sans CJK SC,sans-serif" >C</text>
<circle cx="675.4" cy="336.50" r="2.4" fill="none" stroke="#12c412" stroke-width="1"/>
<line x1="653.00" y1="336.50" x2="673.20" y2="336.50" stroke="#12c412" stroke-width="1.00" />
<text x="675.40" y="337.50" font-size="2.80" fill="#38e038" text-anchor="middle" font-weight="bold" font-family="Liberation Sans,Noto Sans CJK SC,sans-serif" >B</text>
<circle cx="675.4" cy="349.60" r="2.4" fill="none" stroke="#12c412" stroke-width="1"/>
<line x1="653.00" y1="349.60" x2="673.20" y2="349.60" stroke="#12c412" stroke-width="1.00" />
<text x="675.40" y="350.60" font-size="2.80" fill="#38e038" text-anchor="middle" font-weight="bold" font-family="Liberation Sans,Noto Sans CJK SC,sans-serif" >A</text>
<circle cx="675.4" cy="376.00" r="2.4" fill="none" stroke="#12c412" stroke-width="1"/>
<line x1="653.00" y1="376.00" x2="673.20" y2="376.00" stroke="#12c412" stroke-width="1.00" />
<text x="675.40" y="377.00" font-size="2.80" fill="#38e038" text-anchor="middle" font-weight="bold" font-family="Liberation Sans,Noto Sans CJK SC,sans-serif" >1</text>
<line x1="661.50" y1="205.10" x2="661.50" y2="376.00" stroke="#12c412" stroke-width="0.90" />
<line x1="665.60" y1="205.10" x2="665.60" y2="376.00" stroke="#12c412" stroke-width="0.90" />
<line x1="670.00" y1="205.10" x2="670.00" y2="376.00" stroke="#12c412" stroke-width="0.90" />
<text x="0" y="0" font-size="2.1" fill="#fff" stroke="#fff" stroke-width="0.3" font-weight="bold" text-anchor="middle" font-family="Liberation Sans,sans-serif" transform="translate(660.8 208.00) rotate(-90)">900</text>
<line x1="658.60" y1="210.40" x2="663.00" y2="210.40" stroke="#12c412" stroke-width="0.60" />
<text x="0" y="0" font-size="2.1" fill="#fff" stroke="#fff" stroke-width="0.3" font-weight="bold" text-anchor="middle" font-family="Liberation Sans,sans-serif" transform="translate(660.8 215.00) rotate(-90)">900</text>
<line x1="658.60" y1="217.40" x2="663.00" y2="217.40" stroke="#12c412" stroke-width="0.60" />
<text x="0" y="0" font-size="2.1" fill="#fff" stroke="#fff" stroke-width="0.3" font-weight="bold" text-anchor="middle" font-family="Liberation Sans,sans-serif" transform="translate(660.8 222.00) rotate(-90)">900</text>
<line x1="658.60" y1="224.40" x2="663.00" y2="224.40" stroke="#12c412" stroke-width="0.60" />
<text x="0" y="0" font-size="2.1" fill="#fff" stroke="#fff" stroke-width="0.3" font-weight="bold" text-anchor="middle" font-family="Liberation Sans,sans-serif" transform="translate(660.8 229.00) rotate(-90)">900</text>
<line x1="658.60" y1="231.40" x2="663.00" y2="231.40" stroke="#12c412" stroke-width="0.60" />
<text x="0" y="0" font-size="2.1" fill="#fff" stroke="#fff" stroke-width="0.3" font-weight="bold" text-anchor="middle" font-family="Liberation Sans,sans-serif" transform="translate(660.8 236.00) rotate(-90)">900</text>
<line x1="658.60" y1="238.40" x2="663.00" y2="238.40" stroke="#12c412" stroke-width="0.60" />
<text x="0" y="0" font-size="2.1" fill="#fff" stroke="#fff" stroke-width="0.3" font-weight="bold" text-anchor="middle" font-family="Liberation Sans,sans-serif" transform="translate(660.8 243.00) rotate(-90)">900</text>
<line x1="658.60" y1="245.40" x2="663.00" y2="245.40" stroke="#12c412" stroke-width="0.60" />
<text x="0" y="0" font-size="2.1" fill="#fff" stroke="#fff" stroke-width="0.3" font-weight="bold" text-anchor="middle" font-family="Liberation Sans,sans-serif" transform="translate(660.8 250.00) rotate(-90)">900</text>
<line x1="658.60" y1="252.40" x2="663.00" y2="252.40" stroke="#12c412" stroke-width="0.60" />
<text x="0" y="0" font-size="2.1" fill="#fff" stroke="#fff" stroke-width="0.3" font-weight="bold" text-anchor="middle" font-family="Liberation Sans,sans-serif" transform="translate(660.8 258.00) rotate(-90)">900</text>
<line x1="658.60" y1="260.40" x2="663.00" y2="260.40" stroke="#12c412" stroke-width="0.60" />
<text x="0" y="0" font-size="2.1" fill="#fff" stroke="#fff" stroke-width="0.3" font-weight="bold" text-anchor="middle" font-family="Liberation Sans,sans-serif" transform="translate(660.8 266.00) rotate(-90)">900</text>
<line x1="658.60" y1="268.40" x2="663.00" y2="268.40" stroke="#12c412" stroke-width="0.60" />
<text x="0" y="0" font-size="2.1" fill="#fff" stroke="#fff" stroke-width="0.3" font-weight="bold" text-anchor="middle" font-family="Liberation Sans,sans-serif" transform="translate(660.8 274.00) rotate(-90)">900</text>
<line x1="658.60" y1="276.40" x2="663.00" y2="276.40" stroke="#12c412" stroke-width="0.60" />
<text x="0" y="0" font-size="2.1" fill="#fff" stroke="#fff" stroke-width="0.3" font-weight="bold" text-anchor="middle" font-family="Liberation Sans,sans-serif" transform="translate(660.8 281.00) rotate(-90)">900</text>
<line x1="658.60" y1="283.40" x2="663.00" y2="283.40" stroke="#12c412" stroke-width="0.60" />
<text x="0" y="0" font-size="2.1" fill="#fff" stroke="#fff" stroke-width="0.3" font-weight="bold" text-anchor="middle" font-family="Liberation Sans,sans-serif" transform="translate(660.8 289.00) rotate(-90)">900</text>
<line x1="658.60" y1="291.40" x2="663.00" y2="291.40" stroke="#12c412" stroke-width="0.60" />
<text x="0" y="0" font-size="2.1" fill="#fff" stroke="#fff" stroke-width="0.3" font-weight="bold" text-anchor="middle" font-family="Liberation Sans,sans-serif" transform="translate(660.8 296.00) rotate(-90)">900</text>
<line x1="658.60" y1="298.40" x2="663.00" y2="298.40" stroke="#12c412" stroke-width="0.60" />
<text x="0" y="0" font-size="2.1" fill="#fff" stroke="#fff" stroke-width="0.3" font-weight="bold" text-anchor="middle" font-family="Liberation Sans,sans-serif" transform="translate(660.8 302.00) rotate(-90)">900</text>
<line x1="658.60" y1="304.40" x2="663.00" y2="304.40" stroke="#12c412" stroke-width="0.60" />
<text x="0" y="0" font-size="2.1" fill="#fff" stroke="#fff" stroke-width="0.3" font-weight="bold" text-anchor="middle" font-family="Liberation Sans,sans-serif" transform="translate(660.8 310.00) rotate(-90)">900</text>
<line x1="658.60" y1="312.40" x2="663.00" y2="312.40" stroke="#12c412" stroke-width="0.60" />
<text x="0" y="0" font-size="2.1" fill="#fff" stroke="#fff" stroke-width="0.3" font-weight="bold" text-anchor="middle" font-family="Liberation Sans,sans-serif" transform="translate(660.8 316.00) rotate(-90)">900</text>
<line x1="658.60" y1="318.40" x2="663.00" y2="318.40" stroke="#12c412" stroke-width="0.60" />
<text x="0" y="0" font-size="2.1" fill="#fff" stroke="#fff" stroke-width="0.3" font-weight="bold" text-anchor="middle" font-family="Liberation Sans,sans-serif" transform="translate(660.8 321.00) rotate(-90)">900</text>
<line x1="658.60" y1="323.40" x2="663.00" y2="323.40" stroke="#12c412" stroke-width="0.60" />
<text x="0" y="0" font-size="2.1" fill="#fff" stroke="#fff" stroke-width="0.3" font-weight="bold" text-anchor="middle" font-family="Liberation Sans,sans-serif" transform="translate(660.8 328.00) rotate(-90)">900</text>
<line x1="658.60" y1="330.40" x2="663.00" y2="330.40" stroke="#12c412" stroke-width="0.60" />
<text x="0" y="0" font-size="2.1" fill="#fff" stroke="#fff" stroke-width="0.3" font-weight="bold" text-anchor="middle" font-family="Liberation Sans,sans-serif" transform="translate(660.8 333.00) rotate(-90)">900</text>
<line x1="658.60" y1="335.40" x2="663.00" y2="335.40" stroke="#12c412" stroke-width="0.60" />
<text x="0" y="0" font-size="2.1" fill="#fff" stroke="#fff" stroke-width="0.3" font-weight="bold" text-anchor="middle" font-family="Liberation Sans,sans-serif" transform="translate(660.8 340.00) rotate(-90)">900</text>
<line x1="658.60" y1="342.40" x2="663.00" y2="342.40" stroke="#12c412" stroke-width="0.60" />
<text x="0" y="0" font-size="2.1" fill="#fff" stroke="#fff" stroke-width="0.3" font-weight="bold" text-anchor="middle" font-family="Liberation Sans,sans-serif" transform="translate(660.8 346.00) rotate(-90)">900</text>
<line x1="658.60" y1="348.40" x2="663.00" y2="348.40" stroke="#12c412" stroke-width="0.60" />
<text x="0" y="0" font-size="2.4" fill="#fff" stroke="#fff" stroke-width="0.3" font-weight="bold" text-anchor="middle" font-family="Liberation Sans,sans-serif" transform="translate(664.8 215.25) rotate(-90)">3600</text>
<text x="0" y="0" font-size="2.4" fill="#fff" stroke="#fff" stroke-width="0.3" font-weight="bold" text-anchor="middle" font-family="Liberation Sans,sans-serif" transform="translate(664.8 235.45) rotate(-90)">3600</text>
<text x="0" y="0" font-size="2.4" fill="#fff" stroke="#fff" stroke-width="0.3" font-weight="bold" text-anchor="middle" font-family="Liberation Sans,sans-serif" transform="translate(664.8 265.50) rotate(-90)">3600</text>
<text x="0" y="0" font-size="2.4" fill="#fff" stroke="#fff" stroke-width="0.3" font-weight="bold" text-anchor="middle" font-family="Liberation Sans,sans-serif" transform="translate(664.8 296.45) rotate(-90)">3600</text>
<text x="0" y="0" font-size="2.4" fill="#fff" stroke="#fff" stroke-width="0.3" font-weight="bold" text-anchor="middle" font-family="Liberation Sans,sans-serif" transform="translate(664.8 315.90) rotate(-90)">3600</text>
<text x="0" y="0" font-size="2.4" fill="#fff" stroke="#fff" stroke-width="0.3" font-weight="bold" text-anchor="middle" font-family="Liberation Sans,sans-serif" transform="translate(664.8 330.45) rotate(-90)">3600</text>
<text x="0" y="0" font-size="2.4" fill="#fff" stroke="#fff" stroke-width="0.3" font-weight="bold" text-anchor="middle" font-family="Liberation Sans,sans-serif" transform="translate(664.8 343.05) rotate(-90)">3600</text>
<text x="0" y="0" font-size="2.4" fill="#fff" stroke="#fff" stroke-width="0.3" font-weight="bold" text-anchor="middle" font-family="Liberation Sans,sans-serif" transform="translate(664.8 362.80) rotate(-90)">3600</text>
<text x="0" y="0" font-size="2.4" fill="#fff" stroke="#fff" stroke-width="0.3" font-weight="bold" text-anchor="middle" font-family="Liberation Sans,sans-serif" transform="translate(669.2 291) rotate(-90)">17100</text>
<path d="M450.40 257.40 l1.4 1.6 l1.4 -1.6 h4" fill="none" stroke="#12c412" stroke-width="0.7"/>
<text x="456.00" y="257.00" font-size="2.20" fill="#ffffff" text-anchor="middle" font-weight="bold" font-family="Liberation Sans,Noto Sans CJK SC,sans-serif" stroke="#ffffff" stroke-width="0.32">±0.000</text>
<path d="M479.00 257.40 l1.4 1.6 l1.4 -1.6 h4" fill="none" stroke="#12c412" stroke-width="0.7"/>
<text x="484.60" y="257.00" font-size="2.20" fill="#ffffff" text-anchor="middle" font-weight="bold" font-family="Liberation Sans,Noto Sans CJK SC,sans-serif" stroke="#ffffff" stroke-width="0.32">±0.000</text>
<path d="M525.00 252.00 l1.4 1.6 l1.4 -1.6 h4" fill="none" stroke="#12c412" stroke-width="0.7"/>
<text x="530.60" y="251.60" font-size="2.20" fill="#ffffff" text-anchor="middle" font-weight="bold" font-family="Liberation Sans,Noto Sans CJK SC,sans-serif" stroke="#ffffff" stroke-width="0.32">±0.000</text>
<path d="M600.60 273.20 l1.4 1.6 l1.4 -1.6 h4" fill="none" stroke="#12c412" stroke-width="0.7"/>
<text x="606.20" y="272.80" font-size="2.20" fill="#ffffff" text-anchor="middle" font-weight="bold" font-family="Liberation Sans,Noto Sans CJK SC,sans-serif" stroke="#ffffff" stroke-width="0.32">±0.000</text>
<path d="M642.00 266.60 l1.4 1.6 l1.4 -1.6 h4" fill="none" stroke="#12c412" stroke-width="0.7"/>
<text x="647.60" y="266.20" font-size="2.20" fill="#ffffff" text-anchor="middle" font-weight="bold" font-family="Liberation Sans,Noto Sans CJK SC,sans-serif" stroke="#ffffff" stroke-width="0.32">±0.000</text>
<text x="626.60" y="214.00" font-size="2.80" fill="#ffffff" text-anchor="middle" font-weight="bold" font-family="Liberation Sans,Noto Sans CJK SC,sans-serif" stroke="#ffffff" stroke-width="0.32">卫生间</text>
<text x="625.60" y="217.00" font-size="2.20" fill="#ffffff" text-anchor="middle" font-weight="bold" font-family="Liberation Sans,Noto Sans CJK SC,sans-serif" stroke="#ffffff" stroke-width="0.32">3.24</text>
<text x="626.60" y="233.80" font-size="2.80" fill="#ffffff" text-anchor="middle" font-weight="bold" font-family="Liberation Sans,Noto Sans CJK SC,sans-serif" stroke="#ffffff" stroke-width="0.32">卫生间</text>
<text x="625.60" y="236.80" font-size="2.20" fill="#ffffff" text-anchor="middle" font-weight="bold" font-family="Liberation Sans,Noto Sans CJK SC,sans-serif" stroke="#ffffff" stroke-width="0.32">3.24</text>
<text x="537.40" y="317.60" font-size="2.80" fill="#ffffff" text-anchor="middle" font-weight="bold" font-family="Liberation Sans,Noto Sans CJK SC,sans-serif" stroke="#ffffff" stroke-width="0.32">管理间</text>
<text x="536.40" y="320.60" font-size="2.20" fill="#ffffff" text-anchor="middle" font-weight="bold" font-family="Liberation Sans,Noto Sans CJK SC,sans-serif" stroke="#ffffff" stroke-width="0.32">3.24</text>
<text x="607.00" y="312.60" font-size="2.80" fill="#ffffff" text-anchor="middle" font-weight="bold" font-family="Liberation Sans,Noto Sans CJK SC,sans-serif" stroke="#ffffff" stroke-width="0.32">楼梯间</text>
<text x="606.00" y="315.60" font-size="2.20" fill="#ffffff" text-anchor="middle" font-weight="bold" font-family="Liberation Sans,Noto Sans CJK SC,sans-serif" stroke="#ffffff" stroke-width="0.32">3.24</text>
<text x="647.80" y="315.60" font-size="2.80" fill="#ffffff" text-anchor="middle" font-weight="bold" font-family="Liberation Sans,Noto Sans CJK SC,sans-serif" stroke="#ffffff" stroke-width="0.32">-0.450</text>
<text x="531.05" y="341.60" font-size="2.60" fill="#ffffff" text-anchor="middle" font-weight="bold" font-family="Liberation Sans,Noto Sans CJK SC,sans-serif" stroke="#ffffff" stroke-width="0.32">卫生间</text>
<text x="530.05" y="344.60" font-size="2.20" fill="#ffffff" text-anchor="middle" font-weight="bold" font-family="Liberation Sans,Noto Sans CJK SC,sans-serif" stroke="#ffffff" stroke-width="0.32">3.24</text>
<text x="527.65" y="352.80" font-size="2.80" fill="#ffffff" text-anchor="middle" font-weight="bold" font-family="Liberation Sans,Noto Sans CJK SC,sans-serif" stroke="#ffffff" stroke-width="0.32">客房</text>
<text x="527.65" y="355.80" font-size="2.20" fill="#ffffff" text-anchor="middle" font-weight="bold" font-family="Liberation Sans,Noto Sans CJK SC,sans-serif" stroke="#ffffff" stroke-width="0.32">14.7</text>
<text x="544.57" y="341.60" font-size="2.60" fill="#ffffff" text-anchor="middle" font-weight="bold" font-family="Liberation Sans,Noto Sans CJK SC,sans-serif" stroke="#ffffff" stroke-width="0.32">卫生间</text>
<text x="543.57" y="344.60" font-size="2.20" fill="#ffffff" text-anchor="middle" font-weight="bold" font-family="Liberation Sans,Noto Sans CJK SC,sans-serif" stroke="#ffffff" stroke-width="0.32">3.24</text>
<text x="548.77" y="352.80" font-size="2.80" fill="#ffffff" text-anchor="middle" font-weight="bold" font-family="Liberation Sans,Noto Sans CJK SC,sans-serif" stroke="#ffffff" stroke-width="0.32">客房</text>
<text x="548.77" y="355.80" font-size="2.20" fill="#ffffff" text-anchor="middle" font-weight="bold" font-family="Liberation Sans,Noto Sans CJK SC,sans-serif" stroke="#ffffff" stroke-width="0.32">14.7</text>
<text x="571.30" y="341.60" font-size="2.60" fill="#ffffff" text-anchor="middle" font-weight="bold" font-family="Liberation Sans,Noto Sans CJK SC,sans-serif" stroke="#ffffff" stroke-width="0.32">卫生间</text>
<text x="570.30" y="344.60" font-size="2.20" fill="#ffffff" text-anchor="middle" font-weight="bold" font-family="Liberation Sans,Noto Sans CJK SC,sans-serif" stroke="#ffffff" stroke-width="0.32">3.24</text>
<text x="567.90" y="352.80" font-size="2.80" fill="#ffffff" text-anchor="middle" font-weight="bold" font-family="Liberation Sans,Noto Sans CJK SC,sans-serif" stroke="#ffffff" stroke-width="0.32">客房</text>
<text x="567.90" y="355.80" font-size="2.20" fill="#ffffff" text-anchor="middle" font-weight="bold" font-family="Liberation Sans,Noto Sans CJK SC,sans-serif" stroke="#ffffff" stroke-width="0.32">14.7</text>
<text x="584.82" y="341.60" font-size="2.60" fill="#ffffff" text-anchor="middle" font-weight="bold" font-family="Liberation Sans,Noto Sans CJK SC,sans-serif" stroke="#ffffff" stroke-width="0.32">卫生间</text>
<text x="583.82" y="344.60" font-size="2.20" fill="#ffffff" text-anchor="middle" font-weight="bold" font-family="Liberation Sans,Noto Sans CJK SC,sans-serif" stroke="#ffffff" stroke-width="0.32">3.24</text>
<text x="589.02" y="352.80" font-size="2.80" fill="#ffffff" text-anchor="middle" font-weight="bold" font-family="Liberation Sans,Noto Sans CJK SC,sans-serif" stroke="#ffffff" stroke-width="0.32">客房</text>
<text x="589.02" y="355.80" font-size="2.20" fill="#ffffff" text-anchor="middle" font-weight="bold" font-family="Liberation Sans,Noto Sans CJK SC,sans-serif" stroke="#ffffff" stroke-width="0.32">14.7</text>
<text x="611.55" y="341.60" font-size="2.60" fill="#ffffff" text-anchor="middle" font-weight="bold" font-family="Liberation Sans,Noto Sans CJK SC,sans-serif" stroke="#ffffff" stroke-width="0.32">卫生间</text>
<text x="610.55" y="344.60" font-size="2.20" fill="#ffffff" text-anchor="middle" font-weight="bold" font-family="Liberation Sans,Noto Sans CJK SC,sans-serif" stroke="#ffffff" stroke-width="0.32">3.24</text>
<text x="608.15" y="352.80" font-size="2.80" fill="#ffffff" text-anchor="middle" font-weight="bold" font-family="Liberation Sans,Noto Sans CJK SC,sans-serif" stroke="#ffffff" stroke-width="0.32">客房</text>
<text x="608.15" y="355.80" font-size="2.20" fill="#ffffff" text-anchor="middle" font-weight="bold" font-family="Liberation Sans,Noto Sans CJK SC,sans-serif" stroke="#ffffff" stroke-width="0.32">14.7</text>
<text x="625.07" y="341.60" font-size="2.60" fill="#ffffff" text-anchor="middle" font-weight="bold" font-family="Liberation Sans,Noto Sans CJK SC,sans-serif" stroke="#ffffff" stroke-width="0.32">卫生间</text>
<text x="624.07" y="344.60" font-size="2.20" fill="#ffffff" text-anchor="middle" font-weight="bold" font-family="Liberation Sans,Noto Sans CJK SC,sans-serif" stroke="#ffffff" stroke-width="0.32">3.24</text>
<text x="629.27" y="352.80" font-size="2.80" fill="#ffffff" text-anchor="middle" font-weight="bold" font-family="Liberation Sans,Noto Sans CJK SC,sans-serif" stroke="#ffffff" stroke-width="0.32">客房</text>
<text x="629.27" y="355.80" font-size="2.20" fill="#ffffff" text-anchor="middle" font-weight="bold" font-family="Liberation Sans,Noto Sans CJK SC,sans-serif" stroke="#ffffff" stroke-width="0.32">14.7</text>
<text x="582.20" y="214.60" font-size="6.90" fill="#e0e0e0" text-anchor="middle" font-weight="600" font-family="Liberation Serif,Noto Serif CJK SC,serif" font-style="italic">休息厅</text>
<text x="530.20" y="266.00" font-size="6.80" fill="#e0e0e0" text-anchor="middle" font-weight="500" font-family="Liberation Serif,Noto Serif CJK SC,serif" >门厅</text>
<text x="519.20" y="437.20" font-size="7.90" fill="#e2e2e2" text-anchor="start" font-weight="500" font-family="Liberation Sans,Noto Sans CJK SC,sans-serif" >首层平面图</text>
<text x="559.40" y="437.60" font-size="6.40" fill="#d8d8d8" text-anchor="start" font-weight="bold" font-family="Liberation Sans,sans-serif" textLength="10.4" lengthAdjust="spacingAndGlyphs">1:100</text>
<line x1="519.20" y1="440.50" x2="575.00" y2="440.50" stroke="#0c920c" stroke-width="1.50" />
<text x="742.90" y="261.00" font-size="4.20" fill="#ffffff" text-anchor="middle" font-weight="bold" font-family="Liberation Serif,Noto Serif CJK SC,serif" >门窗表</text>
<rect x="691.10" y="262.20" width="100.90" height="56.90" fill="none" stroke="#d4d4d4" stroke-width="0.7"/>
<line x1="698.10" y1="262.20" x2="698.10" y2="319.10" stroke="#cfcfcf" stroke-width="0.60" />
<line x1="709.60" y1="262.20" x2="709.60" y2="319.10" stroke="#cfcfcf" stroke-width="0.60" />
<line x1="723.50" y1="262.20" x2="723.50" y2="319.10" stroke="#cfcfcf" stroke-width="0.60" />
<line x1="728.50" y1="262.20" x2="728.50" y2="319.10" stroke="#cfcfcf" stroke-width="0.60" />
<line x1="748.60" y1="262.20" x2="748.60" y2="319.10" stroke="#cfcfcf" stroke-width="0.60" />
<line x1="754.50" y1="262.20" x2="754.50" y2="319.10" stroke="#cfcfcf" stroke-width="0.60" />
<line x1="765.20" y1="262.20" x2="765.20" y2="319.10" stroke="#cfcfcf" stroke-width="0.60" />
<line x1="716.70" y1="265.40" x2="716.70" y2="319.10" stroke="#cfcfcf" stroke-width="0.60" />
<line x1="709.60" y1="265.40" x2="723.50" y2="265.40" stroke="#cfcfcf" stroke-width="0.50" />
<line x1="691.10" y1="268.60" x2="792.00" y2="268.60" stroke="#bdbdbd" stroke-width="0.60" />
<line x1="698.10" y1="271.97" x2="792.00" y2="271.97" stroke="#bdbdbd" stroke-width="0.60" />
<line x1="698.10" y1="275.33" x2="792.00" y2="275.33" stroke="#bdbdbd" stroke-width="0.60" />
<line x1="698.10" y1="278.70" x2="792.00" y2="278.70" stroke="#bdbdbd" stroke-width="0.60" />
<line x1="698.10" y1="282.07" x2="792.00" y2="282.07" stroke="#bdbdbd" stroke-width="0.60" />
<line x1="698.10" y1="285.43" x2="792.00" y2="285.43" stroke="#bdbdbd" stroke-width="0.60" />
<line x1="691.10" y1="288.80" x2="792.00" y2="288.80" stroke="#bdbdbd" stroke-width="0.60" />
<line x1="698.10" y1="292.17" x2="792.00" y2="292.17" stroke="#bdbdbd" stroke-width="0.60" />
<line x1="691.10" y1="295.53" x2="792.00" y2="295.53" stroke="#bdbdbd" stroke-width="0.60" />
<line x1="698.10" y1="298.90" x2="792.00" y2="298.90" stroke="#bdbdbd" stroke-width="0.60" />
<line x1="698.10" y1="302.27" x2="792.00" y2="302.27" stroke="#bdbdbd" stroke-width="0.60" />
<line x1="698.10" y1="305.63" x2="792.00" y2="305.63" stroke="#bdbdbd" stroke-width="0.60" />
<line x1="698.10" y1="309.00" x2="792.00" y2="309.00" stroke="#bdbdbd" stroke-width="0.60" />
<line x1="698.10" y1="312.37" x2="792.00" y2="312.37" stroke="#bdbdbd" stroke-width="0.60" />
<line x1="691.10" y1="315.73" x2="792.00" y2="315.73" stroke="#bdbdbd" stroke-width="0.60" />
<text x="694.60" y="266.60" font-size="2.50" fill="#fff" text-anchor="middle" font-weight="bold" font-family="Liberation Sans,Noto Sans CJK SC,sans-serif" stroke="#fff" stroke-width="0.25">类型</text>
<text x="703.80" y="266.60" font-size="2.50" fill="#fff" text-anchor="middle" font-weight="bold" font-family="Liberation Sans,Noto Sans CJK SC,sans-serif" stroke="#fff" stroke-width="0.25">设计编号</text>
<text x="713.10" y="266.60" font-size="2.50" fill="#fff" text-anchor="middle" font-weight="bold" font-family="Liberation Sans,Noto Sans CJK SC,sans-serif" stroke="#fff" stroke-width="0.25">洞口尺寸</text>
<text x="726.00" y="266.60" font-size="2.50" fill="#fff" text-anchor="middle" font-weight="bold" font-family="Liberation Sans,Noto Sans CJK SC,sans-serif" stroke="#fff" stroke-width="0.25">数量</text>
<text x="738.50" y="266.60" font-size="2.50" fill="#fff" text-anchor="middle" font-weight="bold" font-family="Liberation Sans,Noto Sans CJK SC,sans-serif" stroke="#fff" stroke-width="0.25">图集名称</text>
<text x="751.50" y="266.60" font-size="2.50" fill="#fff" text-anchor="middle" font-weight="bold" font-family="Liberation Sans,Noto Sans CJK SC,sans-serif" stroke="#fff" stroke-width="0.25">页次</text>
<text x="759.80" y="266.60" font-size="2.50" fill="#fff" text-anchor="middle" font-weight="bold" font-family="Liberation Sans,Noto Sans CJK SC,sans-serif" stroke="#fff" stroke-width="0.25">选用型号</text>
<text x="778.60" y="266.60" font-size="2.50" fill="#fff" text-anchor="middle" font-weight="bold" font-family="Liberation Sans,Noto Sans CJK SC,sans-serif" stroke="#fff" stroke-width="0.25">备注</text>
<text x="703.80" y="271.30" font-size="2.40" fill="#ffffff" text-anchor="middle" font-weight="bold" font-family="Liberation Sans,Noto Sans CJK SC,sans-serif" stroke="#ffffff" stroke-width="0.32">M1</text>
<text x="713.10" y="271.30" font-size="2.40" fill="#ffffff" text-anchor="middle" font-weight="bold" font-family="Liberation Sans,Noto Sans CJK SC,sans-serif" stroke="#ffffff" stroke-width="0.32">900</text>
<text x="720.10" y="271.30" font-size="2.40" fill="#ffffff" text-anchor="middle" font-weight="bold" font-family="Liberation Sans,Noto Sans CJK SC,sans-serif" stroke="#ffffff" stroke-width="0.32">2100</text>
<text x="726.00" y="271.30" font-size="2.40" fill="#ffffff" text-anchor="middle" font-weight="bold" font-family="Liberation Sans,Noto Sans CJK SC,sans-serif" stroke="#ffffff" stroke-width="0.32">2</text>
<text x="703.80" y="274.67" font-size="2.40" fill="#ffffff" text-anchor="middle" font-weight="bold" font-family="Liberation Sans,Noto Sans CJK SC,sans-serif" stroke="#ffffff" stroke-width="0.32">M2</text>
<text x="713.10" y="274.67" font-size="2.40" fill="#ffffff" text-anchor="middle" font-weight="bold" font-family="Liberation Sans,Noto Sans CJK SC,sans-serif" stroke="#ffffff" stroke-width="0.32">900</text>
<text x="720.10" y="274.67" font-size="2.40" fill="#ffffff" text-anchor="middle" font-weight="bold" font-family="Liberation Sans,Noto Sans CJK SC,sans-serif" stroke="#ffffff" stroke-width="0.32">2100</text>
<text x="726.00" y="274.67" font-size="2.40" fill="#ffffff" text-anchor="middle" font-weight="bold" font-family="Liberation Sans,Noto Sans CJK SC,sans-serif" stroke="#ffffff" stroke-width="0.32">2</text>
<text x="703.80" y="278.03" font-size="2.40" fill="#ffffff" text-anchor="middle" font-weight="bold" font-family="Liberation Sans,Noto Sans CJK SC,sans-serif" stroke="#ffffff" stroke-width="0.32">M3</text>
<text x="713.10" y="278.03" font-size="2.40" fill="#ffffff" text-anchor="middle" font-weight="bold" font-family="Liberation Sans,Noto Sans CJK SC,sans-serif" stroke="#ffffff" stroke-width="0.32">900</text>
<text x="720.10" y="278.03" font-size="2.40" fill="#ffffff" text-anchor="middle" font-weight="bold" font-family="Liberation Sans,Noto Sans CJK SC,sans-serif" stroke="#ffffff" stroke-width="0.32">2100</text>
<text x="726.00" y="278.03" font-size="2.40" fill="#ffffff" text-anchor="middle" font-weight="bold" font-family="Liberation Sans,Noto Sans CJK SC,sans-serif" stroke="#ffffff" stroke-width="0.32">2</text>
<text x="703.80" y="281.40" font-size="2.40" fill="#ffffff" text-anchor="middle" font-weight="bold" font-family="Liberation Sans,Noto Sans CJK SC,sans-serif" stroke="#ffffff" stroke-width="0.32">M4</text>
<text x="713.10" y="281.40" font-size="2.40" fill="#ffffff" text-anchor="middle" font-weight="bold" font-family="Liberation Sans,Noto Sans CJK SC,sans-serif" stroke="#ffffff" stroke-width="0.32">900</text>
<text x="720.10" y="281.40" font-size="2.40" fill="#ffffff" text-anchor="middle" font-weight="bold" font-family="Liberation Sans,Noto Sans CJK SC,sans-serif" stroke="#ffffff" stroke-width="0.32">2100</text>
<text x="726.00" y="281.40" font-size="2.40" fill="#ffffff" text-anchor="middle" font-weight="bold" font-family="Liberation Sans,Noto Sans CJK SC,sans-serif" stroke="#ffffff" stroke-width="0.32">2</text>
<text x="703.80" y="284.77" font-size="2.40" fill="#ffffff" text-anchor="middle" font-weight="bold" font-family="Liberation Sans,Noto Sans CJK SC,sans-serif" stroke="#ffffff" stroke-width="0.32">M5</text>
<text x="713.10" y="284.77" font-size="2.40" fill="#ffffff" text-anchor="middle" font-weight="bold" font-family="Liberation Sans,Noto Sans CJK SC,sans-serif" stroke="#ffffff" stroke-width="0.32">900</text>
<text x="720.10" y="284.77" font-size="2.40" fill="#ffffff" text-anchor="middle" font-weight="bold" font-family="Liberation Sans,Noto Sans CJK SC,sans-serif" stroke="#ffffff" stroke-width="0.32">2100</text>
<text x="726.00" y="284.77" font-size="2.40" fill="#ffffff" text-anchor="middle" font-weight="bold" font-family="Liberation Sans,Noto Sans CJK SC,sans-serif" stroke="#ffffff" stroke-width="0.32">2</text>
<text x="703.80" y="288.13" font-size="2.40" fill="#ffffff" text-anchor="middle" font-weight="bold" font-family="Liberation Sans,Noto Sans CJK SC,sans-serif" stroke="#ffffff" stroke-width="0.32">M6</text>
<text x="713.10" y="288.13" font-size="2.40" fill="#ffffff" text-anchor="middle" font-weight="bold" font-family="Liberation Sans,Noto Sans CJK SC,sans-serif" stroke="#ffffff" stroke-width="0.32">900</text>
<text x="720.10" y="288.13" font-size="2.40" fill="#ffffff" text-anchor="middle" font-weight="bold" font-family="Liberation Sans,Noto Sans CJK SC,sans-serif" stroke="#ffffff" stroke-width="0.32">2100</text>
<text x="726.00" y="288.13" font-size="2.40" fill="#ffffff" text-anchor="middle" font-weight="bold" font-family="Liberation Sans,Noto Sans CJK SC,sans-serif" stroke="#ffffff" stroke-width="0.32">2</text>
<text x="703.80" y="291.50" font-size="2.40" fill="#ffffff" text-anchor="middle" font-weight="bold" font-family="Liberation Sans,Noto Sans CJK SC,sans-serif" stroke="#ffffff" stroke-width="0.32">M7</text>
<text x="713.10" y="291.50" font-size="2.40" fill="#ffffff" text-anchor="middle" font-weight="bold" font-family="Liberation Sans,Noto Sans CJK SC,sans-serif" stroke="#ffffff" stroke-width="0.32">900</text>
<text x="720.10" y="291.50" font-size="2.40" fill="#ffffff" text-anchor="middle" font-weight="bold" font-family="Liberation Sans,Noto Sans CJK SC,sans-serif" stroke="#ffffff" stroke-width="0.32">2100</text>
<text x="726.00" y="291.50" font-size="2.40" fill="#ffffff" text-anchor="middle" font-weight="bold" font-family="Liberation Sans,Noto Sans CJK SC,sans-serif" stroke="#ffffff" stroke-width="0.32">2</text>
<text x="703.80" y="294.87" font-size="2.40" fill="#ffffff" text-anchor="middle" font-weight="bold" font-family="Liberation Sans,Noto Sans CJK SC,sans-serif" stroke="#ffffff" stroke-width="0.32">M8</text>
<text x="713.10" y="294.87" font-size="2.40" fill="#ffffff" text-anchor="middle" font-weight="bold" font-family="Liberation Sans,Noto Sans CJK SC,sans-serif" stroke="#ffffff" stroke-width="0.32">900</text>
<text x="720.10" y="294.87" font-size="2.40" fill="#ffffff" text-anchor="middle" font-weight="bold" font-family="Liberation Sans,Noto Sans CJK SC,sans-serif" stroke="#ffffff" stroke-width="0.32">2100</text>
<text x="726.00" y="294.87" font-size="2.40" fill="#ffffff" text-anchor="middle" font-weight="bold" font-family="Liberation Sans,Noto Sans CJK SC,sans-serif" stroke="#ffffff" stroke-width="0.32">2</text>
<text x="703.80" y="298.23" font-size="2.40" fill="#ffffff" text-anchor="middle" font-weight="bold" font-family="Liberation Sans,Noto Sans CJK SC,sans-serif" stroke="#ffffff" stroke-width="0.32">M9</text>
<text x="713.10" y="298.23" font-size="2.40" fill="#ffffff" text-anchor="middle" font-weight="bold" font-family="Liberation Sans,Noto Sans CJK SC,sans-serif" stroke="#ffffff" stroke-width="0.32">900</text>
<text x="720.10" y="298.23" font-size="2.40" fill="#ffffff" text-anchor="middle" font-weight="bold" font-family="Liberation Sans,Noto Sans CJK SC,sans-serif" stroke="#ffffff" stroke-width="0.32">2100</text>
<text x="726.00" y="298.23" font-size="2.40" fill="#ffffff" text-anchor="middle" font-weight="bold" font-family="Liberation Sans,Noto Sans CJK SC,sans-serif" stroke="#ffffff" stroke-width="0.32">2</text>
<text x="703.80" y="301.60" font-size="2.40" fill="#ffffff" text-anchor="middle" font-weight="bold" font-family="Liberation Sans,Noto Sans CJK SC,sans-serif" stroke="#ffffff" stroke-width="0.32">M10</text>
<text x="713.10" y="301.60" font-size="2.40" fill="#ffffff" text-anchor="middle" font-weight="bold" font-family="Liberation Sans,Noto Sans CJK SC,sans-serif" stroke="#ffffff" stroke-width="0.32">900</text>
<text x="720.10" y="301.60" font-size="2.40" fill="#ffffff" text-anchor="middle" font-weight="bold" font-family="Liberation Sans,Noto Sans CJK SC,sans-serif" stroke="#ffffff" stroke-width="0.32">2100</text>
<text x="726.00" y="301.60" font-size="2.40" fill="#ffffff" text-anchor="middle" font-weight="bold" font-family="Liberation Sans,Noto Sans CJK SC,sans-serif" stroke="#ffffff" stroke-width="0.32">2</text>
<text x="703.80" y="304.97" font-size="2.40" fill="#ffffff" text-anchor="middle" font-weight="bold" font-family="Liberation Sans,Noto Sans CJK SC,sans-serif" stroke="#ffffff" stroke-width="0.32">M11</text>
<text x="713.10" y="304.97" font-size="2.40" fill="#ffffff" text-anchor="middle" font-weight="bold" font-family="Liberation Sans,Noto Sans CJK SC,sans-serif" stroke="#ffffff" stroke-width="0.32">900</text>
<text x="720.10" y="304.97" font-size="2.40" fill="#ffffff" text-anchor="middle" font-weight="bold" font-family="Liberation Sans,Noto Sans CJK SC,sans-serif" stroke="#ffffff" stroke-width="0.32">2100</text>
<text x="726.00" y="304.97" font-size="2.40" fill="#ffffff" text-anchor="middle" font-weight="bold" font-family="Liberation Sans,Noto Sans CJK SC,sans-serif" stroke="#ffffff" stroke-width="0.32">2</text>
<text x="703.80" y="308.33" font-size="2.40" fill="#ffffff" text-anchor="middle" font-weight="bold" font-family="Liberation Sans,Noto Sans CJK SC,sans-serif" stroke="#ffffff" stroke-width="0.32">M12</text>
<text x="713.10" y="308.33" font-size="2.40" fill="#ffffff" text-anchor="middle" font-weight="bold" font-family="Liberation Sans,Noto Sans CJK SC,sans-serif" stroke="#ffffff" stroke-width="0.32">900</text>
<text x="720.10" y="308.33" font-size="2.40" fill="#ffffff" text-anchor="middle" font-weight="bold" font-family="Liberation Sans,Noto Sans CJK SC,sans-serif" stroke="#ffffff" stroke-width="0.32">2100</text>
<text x="726.00" y="308.33" font-size="2.40" fill="#ffffff" text-anchor="middle" font-weight="bold" font-family="Liberation Sans,Noto Sans CJK SC,sans-serif" stroke="#ffffff" stroke-width="0.32">2</text>
<text x="703.80" y="311.70" font-size="2.40" fill="#ffffff" text-anchor="middle" font-weight="bold" font-family="Liberation Sans,Noto Sans CJK SC,sans-serif" stroke="#ffffff" stroke-width="0.32">M13</text>
<text x="713.10" y="311.70" font-size="2.40" fill="#ffffff" text-anchor="middle" font-weight="bold" font-family="Liberation Sans,Noto Sans CJK SC,sans-serif" stroke="#ffffff" stroke-width="0.32">900</text>
<text x="720.10" y="311.70" font-size="2.40" fill="#ffffff" text-anchor="middle" font-weight="bold" font-family="Liberation Sans,Noto Sans CJK SC,sans-serif" stroke="#ffffff" stroke-width="0.32">2100</text>
<text x="726.00" y="311.70" font-size="2.40" fill="#ffffff" text-anchor="middle" font-weight="bold" font-family="Liberation Sans,Noto Sans CJK SC,sans-serif" stroke="#ffffff" stroke-width="0.32">2</text>
<text x="703.80" y="315.07" font-size="2.40" fill="#ffffff" text-anchor="middle" font-weight="bold" font-family="Liberation Sans,Noto Sans CJK SC,sans-serif" stroke="#ffffff" stroke-width="0.32">M14</text>
<text x="713.10" y="315.07" font-size="2.40" fill="#ffffff" text-anchor="middle" font-weight="bold" font-family="Liberation Sans,Noto Sans CJK SC,sans-serif" stroke="#ffffff" stroke-width="0.32">900</text>
<text x="720.10" y="315.07" font-size="2.40" fill="#ffffff" text-anchor="middle" font-weight="bold" font-family="Liberation Sans,Noto Sans CJK SC,sans-serif" stroke="#ffffff" stroke-width="0.32">2100</text>
<text x="726.00" y="315.07" font-size="2.40" fill="#ffffff" text-anchor="middle" font-weight="bold" font-family="Liberation Sans,Noto Sans CJK SC,sans-serif" stroke="#ffffff" stroke-width="0.32">2</text>
<text x="703.80" y="318.43" font-size="2.40" fill="#ffffff" text-anchor="middle" font-weight="bold" font-family="Liberation Sans,Noto Sans CJK SC,sans-serif" stroke="#ffffff" stroke-width="0.32">M15</text>
<text x="713.10" y="318.43" font-size="2.40" fill="#ffffff" text-anchor="middle" font-weight="bold" font-family="Liberation Sans,Noto Sans CJK SC,sans-serif" stroke="#ffffff" stroke-width="0.32">900</text>
<text x="720.10" y="318.43" font-size="2.40" fill="#ffffff" text-anchor="middle" font-weight="bold" font-family="Liberation Sans,Noto Sans CJK SC,sans-serif" stroke="#ffffff" stroke-width="0.32">2100</text>
<text x="726.00" y="318.43" font-size="2.40" fill="#ffffff" text-anchor="middle" font-weight="bold" font-family="Liberation Sans,Noto Sans CJK SC,sans-serif" stroke="#ffffff" stroke-width="0.32">2</text>
<text x="694.60" y="279.40" font-size="2.60" fill="#fff" text-anchor="middle" font-weight="bold" font-family="Liberation Sans,Noto Sans CJK SC,sans-serif" >门</text>
<text x="694.60" y="288.60" font-size="2.60" fill="#fff" text-anchor="middle" font-weight="bold" font-family="Liberation Sans,Noto Sans CJK SC,sans-serif" >门联</text>
<text x="694.60" y="291.80" font-size="2.60" fill="#fff" text-anchor="middle" font-weight="bold" font-family="Liberation Sans,Noto Sans CJK SC,sans-serif" >窗</text>
<text x="694.60" y="305.20" font-size="2.60" fill="#fff" text-anchor="middle" font-weight="bold" font-family="Liberation Sans,Noto Sans CJK SC,sans-serif" >窗</text>
<text x="694.60" y="318.00" font-size="2.60" fill="#fff" text-anchor="middle" font-weight="bold" font-family="Liberation Sans,Noto Sans CJK SC,sans-serif" >洞口</text>
<circle cx="743.2" cy="380.2" r="6.1" fill="none" stroke="#14b014" stroke-width="0.9"/>
<polygon points="743.2,373.6 744.3,386.2 742.1,386.2" fill="#18d418"/>
<text x="743.20" y="372.80" font-size="2.80" fill="#fff" text-anchor="middle" font-weight="bold" font-family="Liberation Sans,Noto Sans CJK SC,sans-serif" >N</text>
<rect x="695.1" y="426.9" width="110.5" height="20.8" fill="none" stroke="#14bcc4" stroke-width="1.4"/>
<line x1="715.60" y1="426.90" x2="715.60" y2="447.70" stroke="#14bcc4" stroke-width="0.80" />
<line x1="752.90" y1="426.90" x2="752.90" y2="447.70" stroke="#14bcc4" stroke-width="0.80" />
<line x1="760.60" y1="426.90" x2="760.60" y2="447.70" stroke="#14bcc4" stroke-width="0.80" />
<line x1="790.60" y1="426.90" x2="790.60" y2="447.70" stroke="#14bcc4" stroke-width="0.80" />
<line x1="797.10" y1="426.90" x2="797.10" y2="447.70" stroke="#14bcc4" stroke-width="0.80" />
<line x1="723.50" y1="432.00" x2="723.50" y2="447.70" stroke="#119aa2" stroke-width="0.70" />
<line x1="730.50" y1="432.00" x2="730.50" y2="447.70" stroke="#119aa2" stroke-width="0.70" />
<line x1="734.50" y1="432.00" x2="734.50" y2="447.70" stroke="#119aa2" stroke-width="0.70" />
<line x1="742.50" y1="432.00" x2="742.50" y2="447.70" stroke="#119aa2" stroke-width="0.70" />
<line x1="749.50" y1="432.00" x2="749.50" y2="447.70" stroke="#119aa2" stroke-width="0.70" />
<line x1="715.60" y1="432.00" x2="752.90" y2="432.00" stroke="#119aa2" stroke-width="0.60" />
<line x1="752.90" y1="432.00" x2="760.60" y2="432.00" stroke="#119aa2" stroke-width="0.60" />
<line x1="790.60" y1="432.00" x2="805.60" y2="432.00" stroke="#119aa2" stroke-width="0.60" />
<line x1="715.60" y1="437.20" x2="752.90" y2="437.20" stroke="#119aa2" stroke-width="0.60" />
<line x1="752.90" y1="437.20" x2="760.60" y2="437.20" stroke="#119aa2" stroke-width="0.60" />
<line x1="790.60" y1="437.20" x2="805.60" y2="437.20" stroke="#119aa2" stroke-width="0.60" />
<line x1="715.60" y1="442.40" x2="752.90" y2="442.40" stroke="#119aa2" stroke-width="0.60" />
<line x1="752.90" y1="442.40" x2="760.60" y2="442.40" stroke="#119aa2" stroke-width="0.60" />
<line x1="790.60" y1="442.40" x2="805.60" y2="442.40" stroke="#119aa2" stroke-width="0.60" />
<line x1="760.60" y1="432.60" x2="790.60" y2="432.60" stroke="#119aa2" stroke-width="0.60" />
<line x1="760.60" y1="437.60" x2="790.60" y2="437.60" stroke="#119aa2" stroke-width="0.60" />
<text x="729.60" y="430.60" font-size="2.70" fill="#46f4f8" text-anchor="middle" font-weight="bold" font-family="Liberation Sans,Noto Sans CJK SC,sans-serif" stroke="#46f4f8" stroke-width="0.3">某建筑设计研究院有限公司</text>
<text x="719.60" y="435.60" font-size="2.50" fill="#46f4f8" text-anchor="middle" font-weight="bold" font-family="Liberation Sans,Noto Sans CJK SC,sans-serif" stroke="#46f4f8" stroke-width="0.28">审定</text>
<text x="719.60" y="440.80" font-size="2.50" fill="#46f4f8" text-anchor="middle" font-weight="bold" font-family="Liberation Sans,Noto Sans CJK SC,sans-serif" stroke="#46f4f8" stroke-width="0.28">审核</text>
<text x="719.60" y="446.00" font-size="2.50" fill="#46f4f8" text-anchor="middle" font-weight="bold" font-family="Liberation Sans,Noto Sans CJK SC,sans-serif" stroke="#46f4f8" stroke-width="0.28">校对</text>
<text x="738.60" y="435.60" font-size="2.50" fill="#46f4f8" text-anchor="middle" font-weight="bold" font-family="Liberation Sans,Noto Sans CJK SC,sans-serif" stroke="#46f4f8" stroke-width="0.28">设计</text>
<text x="738.60" y="440.80" font-size="2.50" fill="#46f4f8" text-anchor="middle" font-weight="bold" font-family="Liberation Sans,Noto Sans CJK SC,sans-serif" stroke="#46f4f8" stroke-width="0.28">制图</text>
<text x="738.60" y="446.00" font-size="2.50" fill="#46f4f8" text-anchor="middle" font-weight="bold" font-family="Liberation Sans,Noto Sans CJK SC,sans-serif" stroke="#46f4f8" stroke-width="0.28">负责</text>
<text x="756.70" y="430.60" font-size="2.50" fill="#46f4f8" text-anchor="middle" font-weight="bold" font-family="Liberation Sans,Noto Sans CJK SC,sans-serif" stroke="#46f4f8" stroke-width="0.28">建设单位</text>
<text x="756.70" y="435.60" font-size="2.50" fill="#46f4f8" text-anchor="middle" font-weight="bold" font-family="Liberation Sans,Noto Sans CJK SC,sans-serif" stroke="#46f4f8" stroke-width="0.28">工程名称</text>
<text x="756.70" y="442.60" font-size="2.50" fill="#46f4f8" text-anchor="middle" font-weight="bold" font-family="Liberation Sans,Noto Sans CJK SC,sans-serif" stroke="#46f4f8" stroke-width="0.28">图名</text>
<text x="775.60" y="430.80" font-size="2.50" fill="#46f4f8" text-anchor="middle" font-weight="bold" font-family="Liberation Sans,Noto Sans CJK SC,sans-serif" stroke="#46f4f8" stroke-width="0.28">某某公司</text>
<text x="775.60" y="436.00" font-size="2.50" fill="#46f4f8" text-anchor="middle" font-weight="bold" font-family="Liberation Sans,Noto Sans CJK SC,sans-serif" stroke="#46f4f8" stroke-width="0.28">某某宾馆</text>
<text x="775.60" y="443.40" font-size="2.50" fill="#46f4f8" text-anchor="middle" font-weight="bold" font-family="Liberation Sans,Noto Sans CJK SC,sans-serif" stroke="#46f4f8" stroke-width="0.28">首层平面图</text>
<text x="794.00" y="430.80" font-size="2.50" fill="#46f4f8" text-anchor="middle" font-weight="bold" font-family="Liberation Sans,Noto Sans CJK SC,sans-serif" stroke="#46f4f8" stroke-width="0.28">工号</text>
<text x="794.00" y="436.00" font-size="2.50" fill="#46f4f8" text-anchor="middle" font-weight="bold" font-family="Liberation Sans,Noto Sans CJK SC,sans-serif" stroke="#46f4f8" stroke-width="0.28">图别</text>
<text x="794.00" y="441.20" font-size="2.50" fill="#46f4f8" text-anchor="middle" font-weight="bold" font-family="Liberation Sans,Noto Sans CJK SC,sans-serif" stroke="#46f4f8" stroke-width="0.28">图号</text>
<text x="794.00" y="446.20" font-size="2.50" fill="#46f4f8" text-anchor="middle" font-weight="bold" font-family="Liberation Sans,Noto Sans CJK SC,sans-serif" stroke="#46f4f8" stroke-width="0.28">日期</text>
<text x="801.40" y="436.00" font-size="2.50" fill="#46f4f8" text-anchor="middle" font-weight="bold" font-family="Liberation Sans,Noto Sans CJK SC,sans-serif" stroke="#46f4f8" stroke-width="0.28">建施</text>
<text x="801.40" y="441.20" font-size="2.50" fill="#46f4f8" text-anchor="middle" font-weight="bold" font-family="Liberation Sans,Noto Sans CJK SC,sans-serif" stroke="#46f4f8" stroke-width="0.28">03</text>
<text x="801.40" y="446.20" font-size="2.50" fill="#46f4f8" text-anchor="middle" font-weight="bold" font-family="Liberation Sans,Noto Sans CJK SC,sans-serif" stroke="#46f4f8" stroke-width="0.28">2010</text><rect x="41.6" y="446.2" width="5.8" height="5.6" fill="none" stroke="#c8c8c8" stroke-width="0.8"/>
<line x1="44.70" y1="416.00" x2="44.70" y2="446.20" stroke="#c8c8c8" stroke-width="0.90" />
<line x1="47.40" y1="448.90" x2="77.80" y2="448.90" stroke="#c8c8c8" stroke-width="0.90" />
<path d="M44.2 403.4 L48 407.8 L51.8 403.4 M48 407.8 V412" fill="none" stroke="#c8c8c8" stroke-width="0.9"/>
<path d="M82 441.4 L90 449.6 M90 441.4 L82 449.6" fill="none" stroke="#c8c8c8" stroke-width="0.9"/>
<line x1="794.30" y1="426.00" x2="794.30" y2="461.50" stroke="#bdbdbd" stroke-width="0.90" />
<line x1="759.80" y1="460.70" x2="829.00" y2="460.70" stroke="#bdbdbd" stroke-width="1.00" />
<rect x="791.6" y="457.6" width="5.6" height="5" fill="none" stroke="#bdbdbd" stroke-width="0.8"/></g></svg>
<svg width="1200" height="709" viewBox="0 0 1200 709" style="z-index:1">
<path d="M66.8 462.7 H100.2 L93.4 476.8 H73.6 Z" fill="#222932"/>
<path d="M100.8 463 H131.4 L125 475.8 H98.8 L96.2 470 Z" fill="#333d49"/>
<path d="M133.2 463 H163.8 L157.4 475.8 H131.2 L128.6 470 Z" fill="#333d49"/>
</svg>
<svg width="1200" height="709" viewBox="0 0 1200 709" style="z-index:3">
<path d="M33.2 483.8 H44 M33.2 485.4 H44" stroke="#6f7780" stroke-width="0.8"/>
<path d="M33.7 489.4 L43.3 498.9 M43.3 489.4 L33.7 498.9" stroke="#d4d4d4" stroke-width="1.1"/>
<rect x="30.7" y="480.9" width="432.7" height="210.2" fill="none" stroke="#e21a22" stroke-width="2"/>
<line x1="490" y1="601.4" x2="1004.6" y2="560" stroke="#e0141e" stroke-width="2"/>
<polygon points="482.6,602 492.1,596.6 492.9,606.2" fill="#e0141e"/>
<path d="M1198.5 704.5 h1 M1196.5 706.5 h3 M1194.5 708.5 h5" stroke="#8a9098" stroke-width="1"/>
</svg>
</div></body></html>
